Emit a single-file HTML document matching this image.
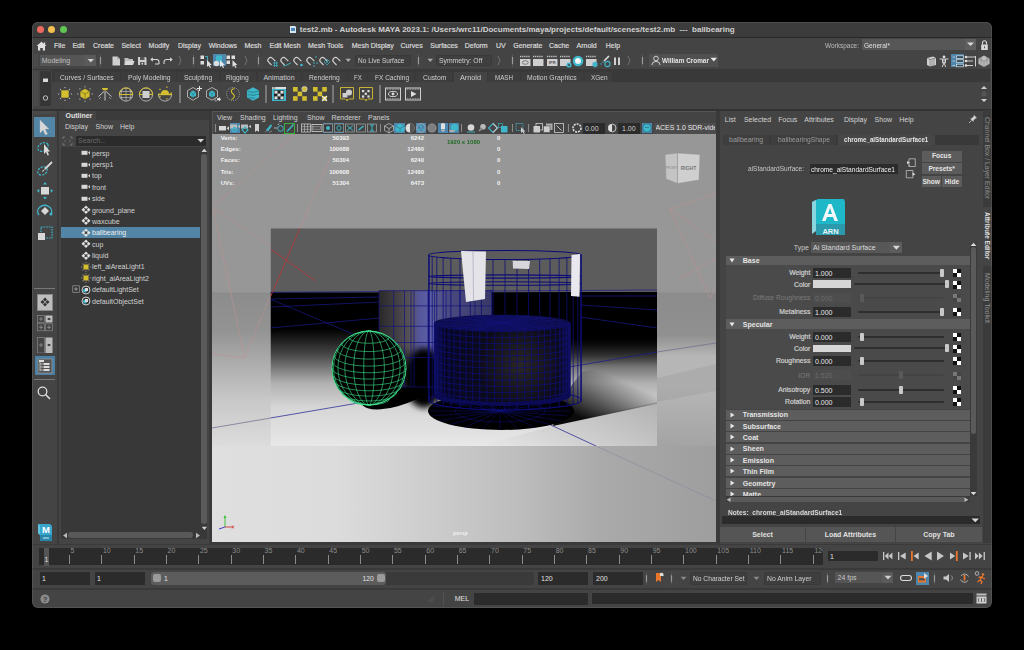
<!DOCTYPE html>
<html><head><meta charset="utf-8">
<style>
*{margin:0;padding:0;box-sizing:border-box}
html,body{width:1024px;height:650px;background:#000;overflow:hidden;font-family:"Liberation Sans",sans-serif}
#w{position:absolute;left:0;top:0;width:1024px;height:650px;clip-path:inset(22px 32px 42px 32px round 6px);background:#444}
.a{position:absolute}
.t{position:absolute;white-space:pre;line-height:1}
.b{font-weight:bold}
.m{-webkit-text-stroke:0.2px currentColor}
</style></head><body><div id="w">
<div class="a" style="left:32.00px;top:22.00px;width:960.00px;height:15.00px;background:#3c3c3c;"></div>
<div class="a" style="left:32.00px;top:37.00px;width:960.00px;height:1.00px;background:#282828;"></div>
<div class="a" style="left:36.50px;top:26.00px;width:7.00px;height:7.00px;background:#ed6a5e;border-radius:50%"></div>
<div class="a" style="left:48.00px;top:26.00px;width:7.00px;height:7.00px;background:#f5bf4f;border-radius:50%"></div>
<div class="a" style="left:59.50px;top:26.00px;width:7.00px;height:7.00px;background:#61c554;border-radius:50%"></div>
<div class="a" style="left:290.00px;top:26.00px;width:6.00px;height:7.00px;background:#8fb4d6;border-radius:1px"></div>
<div class="t b" style="left:299.75px;top:25.54px;font-size:8px;color:#cfcfcf;">test2.mb - Autodesk MAYA 2023.1: /Users/wrc11/Documents/maya/projects/default/scenes/test2.mb  ---  ballbearing</div>
<div class="t m" style="left:54.00px;top:42.23px;font-size:7px;color:#d8d8d8;">File</div>
<div class="t m" style="left:72.40px;top:42.23px;font-size:7px;color:#d8d8d8;">Edit</div>
<div class="t m" style="left:93.00px;top:42.23px;font-size:7px;color:#d8d8d8;">Create</div>
<div class="t m" style="left:121.40px;top:42.23px;font-size:7px;color:#d8d8d8;">Select</div>
<div class="t m" style="left:148.60px;top:42.23px;font-size:7px;color:#d8d8d8;">Modify</div>
<div class="t m" style="left:178.00px;top:42.23px;font-size:7px;color:#d8d8d8;">Display</div>
<div class="t m" style="left:208.70px;top:42.23px;font-size:7px;color:#d8d8d8;">Windows</div>
<div class="t m" style="left:244.40px;top:42.23px;font-size:7px;color:#d8d8d8;">Mesh</div>
<div class="t m" style="left:269.50px;top:42.23px;font-size:7px;color:#d8d8d8;">Edit Mesh</div>
<div class="t m" style="left:308.00px;top:42.23px;font-size:7px;color:#d8d8d8;">Mesh Tools</div>
<div class="t m" style="left:351.75px;top:42.23px;font-size:7px;color:#d8d8d8;">Mesh Display</div>
<div class="t m" style="left:400.50px;top:42.23px;font-size:7px;color:#d8d8d8;">Curves</div>
<div class="t m" style="left:430.25px;top:42.23px;font-size:7px;color:#d8d8d8;">Surfaces</div>
<div class="t m" style="left:464.75px;top:42.23px;font-size:7px;color:#d8d8d8;">Deform</div>
<div class="t m" style="left:496.00px;top:42.23px;font-size:7px;color:#d8d8d8;">UV</div>
<div class="t m" style="left:513.25px;top:42.23px;font-size:7px;color:#d8d8d8;">Generate</div>
<div class="t m" style="left:549.00px;top:42.23px;font-size:7px;color:#d8d8d8;">Cache</div>
<div class="t m" style="left:576.50px;top:42.23px;font-size:7px;color:#d8d8d8;">Arnold</div>
<div class="t m" style="left:605.75px;top:42.23px;font-size:7px;color:#d8d8d8;">Help</div>
<div class="t" style="left:825.30px;top:42.03px;font-size:7px;color:#bdbdbd;transform:scaleX(0.9232);transform-origin:0 0;">Workspace:</div>
<div class="a" style="left:862.00px;top:39.30px;width:114.00px;height:10.70px;background:#575757;"></div>
<div class="a" style="left:964.50px;top:39.30px;width:11.50px;height:10.70px;background:#5f5f5f;"></div>
<div class="t" style="left:864.00px;top:41.83px;font-size:7px;color:#e0e0e0;transform:scaleX(0.9411);transform-origin:0 0;">General*</div>
<div class="a" style="left:39.80px;top:55.00px;width:56.00px;height:11.00px;background:#555555;"></div>
<div class="a" style="left:84.30px;top:55.00px;width:11.50px;height:11.00px;background:#5a5a5a;"></div>
<div class="t" style="left:41.70px;top:57.23px;font-size:7px;color:#c0c0c0;">Modeling</div>
<div class="a" style="left:355.00px;top:54.70px;width:56.30px;height:11.30px;background:#3f3f3f;border:1px solid #393939;border-radius:2px"></div>
<div class="t" style="left:357.80px;top:57.13px;font-size:7px;color:#d0d0d0;transform:scaleX(0.9317);transform-origin:0 0;">No Live Surface</div>
<div class="a" style="left:436.30px;top:54.70px;width:56.00px;height:11.30px;background:#3f3f3f;border:1px solid #393939;border-radius:2px"></div>
<div class="t" style="left:439.00px;top:57.13px;font-size:7px;color:#d0d0d0;transform:scaleX(0.9710);transform-origin:0 0;">Symmetry: Off</div>
<div class="a" style="left:649.00px;top:54.00px;width:68.80px;height:12.80px;background:#505050;"></div>
<div class="t b" style="left:662.00px;top:57.13px;font-size:7px;color:#e6e6e6;transform:scaleX(0.9145);transform-origin:0 0;">William Cromar</div>
<div class="a" style="left:32.00px;top:68.50px;width:960.00px;height:1.00px;background:#383838;"></div>
<div class="a" style="left:40.30px;top:70.80px;width:10.70px;height:35.20px;background:#363636;"></div>
<div class="a" style="left:52.00px;top:70.00px;width:938.00px;height:11.50px;background:#393939;"></div>
<div class="a" style="left:54.60px;top:72.00px;width:65.40px;height:9.50px;background:#3d3d3d;"></div>
<div class="t" style="left:59.50px;top:73.63px;font-size:7px;color:#cfcfcf;transform:scaleX(0.9617);transform-origin:0 0;">Curves / Surfaces</div>
<div class="a" style="left:121.00px;top:72.00px;width:54.70px;height:9.50px;background:#3d3d3d;"></div>
<div class="t" style="left:127.50px;top:73.63px;font-size:7px;color:#cfcfcf;transform:scaleX(0.9644);transform-origin:0 0;">Poly Modeling</div>
<div class="a" style="left:177.00px;top:72.00px;width:42.20px;height:9.50px;background:#3d3d3d;"></div>
<div class="t" style="left:184.00px;top:73.63px;font-size:7px;color:#cfcfcf;transform:scaleX(0.9793);transform-origin:0 0;">Sculpting</div>
<div class="a" style="left:220.80px;top:72.00px;width:35.20px;height:9.50px;background:#3d3d3d;"></div>
<div class="t" style="left:226.25px;top:73.63px;font-size:7px;color:#cfcfcf;transform:scaleX(0.9542);transform-origin:0 0;">Rigging</div>
<div class="a" style="left:257.50px;top:72.00px;width:43.00px;height:9.50px;background:#3d3d3d;"></div>
<div class="t" style="left:263.40px;top:73.63px;font-size:7px;color:#cfcfcf;">Animation</div>
<div class="a" style="left:302.00px;top:72.00px;width:44.60px;height:9.50px;background:#3d3d3d;"></div>
<div class="t" style="left:308.75px;top:73.63px;font-size:7px;color:#cfcfcf;transform:scaleX(0.9521);transform-origin:0 0;">Rendering</div>
<div class="a" style="left:348.00px;top:72.00px;width:18.90px;height:9.50px;background:#3d3d3d;"></div>
<div class="t" style="left:353.60px;top:73.63px;font-size:7px;color:#cfcfcf;transform:scaleX(0.8720);transform-origin:0 0;">FX</div>
<div class="a" style="left:368.40px;top:72.00px;width:46.10px;height:9.50px;background:#3d3d3d;"></div>
<div class="t" style="left:374.70px;top:73.63px;font-size:7px;color:#cfcfcf;transform:scaleX(0.9311);transform-origin:0 0;">FX Caching</div>
<div class="a" style="left:416.00px;top:72.00px;width:36.00px;height:9.50px;background:#3d3d3d;"></div>
<div class="t" style="left:422.80px;top:73.63px;font-size:7px;color:#cfcfcf;transform:scaleX(0.9724);transform-origin:0 0;">Custom</div>
<div class="a" style="left:454.00px;top:72.00px;width:33.00px;height:9.50px;background:#444;"></div>
<div class="t" style="left:460.00px;top:73.63px;font-size:7px;color:#cfcfcf;transform:scaleX(1.0379);transform-origin:0 0;">Arnold</div>
<div class="a" style="left:488.00px;top:72.00px;width:31.60px;height:9.50px;background:#3d3d3d;"></div>
<div class="t" style="left:494.80px;top:73.63px;font-size:7px;color:#cfcfcf;transform:scaleX(0.8900);transform-origin:0 0;">MASH</div>
<div class="a" style="left:521.00px;top:72.00px;width:62.00px;height:9.50px;background:#3d3d3d;"></div>
<div class="t" style="left:527.00px;top:73.63px;font-size:7px;color:#cfcfcf;transform:scaleX(0.9733);transform-origin:0 0;">Motion Graphics</div>
<div class="a" style="left:585.00px;top:72.00px;width:27.00px;height:9.50px;background:#3d3d3d;"></div>
<div class="t" style="left:590.50px;top:73.63px;font-size:7px;color:#cfcfcf;transform:scaleX(0.9218);transform-origin:0 0;">XGen</div>
<div class="a" style="left:32.00px;top:108.50px;width:960.00px;height:2.00px;background:#333333;"></div>
<div class="a" style="left:57.00px;top:110.50px;width:2.00px;height:433.00px;background:#3a3a3a;"></div>
<div class="a" style="left:59.00px;top:110.50px;width:37.00px;height:9.50px;background:#444;"></div>
<div class="a" style="left:96.00px;top:110.50px;width:113.00px;height:9.50px;background:#3b3b3b;"></div>
<div class="t b" style="left:65.50px;top:112.13px;font-size:7px;color:#e0e0e0;">Outliner</div>
<div class="t" style="left:65.00px;top:123.13px;font-size:7px;color:#d0d0d0;">Display</div>
<div class="t" style="left:95.50px;top:123.13px;font-size:7px;color:#d0d0d0;">Show</div>
<div class="t" style="left:120.00px;top:123.13px;font-size:7px;color:#d0d0d0;">Help</div>
<div class="a" style="left:76.30px;top:135.60px;width:130.00px;height:10.00px;background:#2b2b2b;"></div>
<div class="t" style="left:78.00px;top:137.43px;font-size:7px;color:#6a6a6a;">Search...</div>
<div class="a" style="left:60.50px;top:146.50px;width:146.50px;height:392.00px;background:#383838;"></div>
<div class="a" style="left:200.80px;top:146.50px;width:6.20px;height:385.00px;background:#393939;"></div>
<div class="a" style="left:201.20px;top:154.00px;width:5.40px;height:369.50px;background:#5a5a5a;border-radius:2.7px"></div>
<div class="t" style="left:92.00px;top:149.63px;font-size:7px;color:#d2d2d2;">persp</div>
<div class="t" style="left:92.00px;top:161.01px;font-size:7px;color:#d2d2d2;">persp1</div>
<div class="t" style="left:92.00px;top:172.39px;font-size:7px;color:#d2d2d2;">top</div>
<div class="t" style="left:92.00px;top:183.77px;font-size:7px;color:#d2d2d2;">front</div>
<div class="t" style="left:92.00px;top:195.15px;font-size:7px;color:#d2d2d2;">side</div>
<div class="t" style="left:92.00px;top:206.53px;font-size:7px;color:#d2d2d2;">ground_plane</div>
<div class="t" style="left:92.00px;top:217.91px;font-size:7px;color:#d2d2d2;">waxcube</div>
<div class="a" style="left:60.80px;top:227.00px;width:139.50px;height:11.00px;background:#5285a6;"></div>
<div class="t" style="left:92.00px;top:229.29px;font-size:7px;color:#f0f0f0;">ballbearing</div>
<div class="t" style="left:92.00px;top:240.67px;font-size:7px;color:#d2d2d2;">cup</div>
<div class="t" style="left:92.00px;top:252.05px;font-size:7px;color:#d2d2d2;">liquid</div>
<div class="t" style="left:92.00px;top:263.43px;font-size:7px;color:#d2d2d2;">left_aiAreaLight1</div>
<div class="t" style="left:92.00px;top:274.81px;font-size:7px;color:#d2d2d2;">right_aiAreaLight2</div>
<div class="t" style="left:92.00px;top:286.19px;font-size:7px;color:#d2d2d2;">defaultLightSet</div>
<div class="t" style="left:92.00px;top:297.57px;font-size:7px;color:#d2d2d2;">defaultObjectSet</div>
<div class="a" style="left:60.50px;top:531.50px;width:146.50px;height:7.00px;background:#383838;"></div>
<div class="a" style="left:67.50px;top:532.30px;width:125.00px;height:5.80px;background:#595959;border-radius:2.9px"></div>
<div class="a" style="left:209.00px;top:110.50px;width:3.00px;height:433.00px;background:#3a3a3a;"></div>
<div class="a" style="left:212.00px;top:111.30px;width:503.50px;height:22.50px;background:#444;border-top:1px solid #555;border-left:1px solid #555"></div>
<div class="t" style="left:217.00px;top:113.83px;font-size:7px;color:#d2d2d2;">View</div>
<div class="t" style="left:240.00px;top:113.83px;font-size:7px;color:#d2d2d2;">Shading</div>
<div class="t" style="left:273.00px;top:113.83px;font-size:7px;color:#d2d2d2;">Lighting</div>
<div class="t" style="left:307.00px;top:113.83px;font-size:7px;color:#d2d2d2;">Show</div>
<div class="t" style="left:331.40px;top:113.83px;font-size:7px;color:#d2d2d2;">Renderer</div>
<div class="t" style="left:368.00px;top:113.83px;font-size:7px;color:#d2d2d2;">Panels</div>
<div class="a" style="left:212.00px;top:134.00px;width:503.50px;height:407.50px;background:#9c9c9c;"></div>
<div class="a" style="left:212.00px;top:541.50px;width:503.50px;height:2.00px;background:#3a3a3a;"></div>
<div class="a" style="left:715.50px;top:110.50px;width:4.00px;height:433.00px;background:#3a3a3a;"></div>
<div class="t" style="left:724.75px;top:116.13px;font-size:7px;color:#d2d2d2;">List</div>
<div class="t" style="left:743.90px;top:116.13px;font-size:7px;color:#d2d2d2;">Selected</div>
<div class="t" style="left:778.30px;top:116.13px;font-size:7px;color:#d2d2d2;">Focus</div>
<div class="t" style="left:804.30px;top:116.13px;font-size:7px;color:#d2d2d2;">Attributes</div>
<div class="t" style="left:844.00px;top:116.13px;font-size:7px;color:#d2d2d2;">Display</div>
<div class="t" style="left:874.60px;top:116.13px;font-size:7px;color:#d2d2d2;">Show</div>
<div class="t" style="left:899.20px;top:116.13px;font-size:7px;color:#d2d2d2;">Help</div>
<div class="a" style="left:722.80px;top:135.00px;width:256.20px;height:9.60px;background:#393939;"></div>
<div class="a" style="left:722.80px;top:135.00px;width:46.50px;height:9.60px;background:#3e3e3e;"></div>
<div class="a" style="left:771.20px;top:135.00px;width:65.10px;height:9.60px;background:#3e3e3e;"></div>
<div class="a" style="left:837.70px;top:135.00px;width:97.10px;height:9.60px;background:#474747;"></div>
<div class="t" style="left:729.00px;top:136.43px;font-size:7px;color:#9a9a9a;">ballbearing</div>
<div class="t" style="left:777.50px;top:136.43px;font-size:7px;color:#9a9a9a;transform:scaleX(0.9544);transform-origin:0 0;">ballbearingShape</div>
<div class="t b" style="left:843.70px;top:136.43px;font-size:7px;color:#e6e6e6;transform:scaleX(0.8881);transform-origin:0 0;">chrome_aiStandardSurface1</div>
<div class="t" style="left:748.00px;top:165.33px;font-size:7px;color:#c8c8c8;transform:scaleX(0.9345);transform-origin:0 0;">aiStandardSurface:</div>
<div class="a" style="left:809.80px;top:163.80px;width:88.00px;height:10.10px;background:#2b2b2b;"></div>
<div class="t" style="left:811.00px;top:165.53px;font-size:7px;color:#f0f0f0;transform:scaleX(0.9427);transform-origin:0 0;">chrome_aiStandardSurface1</div>
<div class="a" style="left:921.60px;top:150.70px;width:40.00px;height:11.20px;background:#5c5c5c;"></div>
<div class="t b" style="left:931.88px;top:153.42px;font-size:6.6px;color:#e4e4e4;">Focus</div>
<div class="a" style="left:921.60px;top:163.20px;width:40.00px;height:11.00px;background:#5c5c5c;"></div>
<div class="t b" style="left:928.39px;top:165.82px;font-size:6.6px;color:#e4e4e4;">Presets*</div>
<div class="a" style="left:921.60px;top:176.00px;width:19.20px;height:11.00px;background:#5c5c5c;"></div>
<div class="t b" style="left:922.40px;top:178.62px;font-size:6.6px;color:#e4e4e4;">Show</div>
<div class="a" style="left:942.40px;top:176.00px;width:19.20px;height:11.00px;background:#5c5c5c;"></div>
<div class="t b" style="left:944.85px;top:178.62px;font-size:6.6px;color:#e4e4e4;">Hide</div>
<div class="t" style="left:793.83px;top:244.13px;font-size:7px;color:#c8c8c8;">Type</div>
<div class="a" style="left:811.20px;top:242.30px;width:90.70px;height:10.40px;background:#575757;"></div>
<div class="a" style="left:890.20px;top:242.30px;width:11.70px;height:10.40px;background:#5c5c5c;"></div>
<div class="t" style="left:813.00px;top:244.13px;font-size:7px;color:#dcdcdc;">Ai Standard Surface</div>
<div class="a" style="left:983.00px;top:110.00px;width:9.00px;height:433.00px;background:#3b3b3b;"></div>
<div class="a" style="left:983.00px;top:206.50px;width:9.00px;height:59.20px;background:#444;"></div>
<div class="a" style="left:725.60px;top:265.00px;width:244.70px;height:54.00px;background:#4a4a4a;"></div>
<div class="a" style="left:725.60px;top:329.30px;width:244.70px;height:80.00px;background:#4a4a4a;"></div>
<div class="a" style="left:725.60px;top:255.50px;width:244.70px;height:9.50px;background:#5d5d5d;"></div>
<svg class="a" style="left:729px;top:258.0px;" width="6" height="5" viewBox="0 0 6 5"><path d="M0.5 0.5 L5.5 0.5 L3 4.5 Z" fill="#e8e8e8"/></svg>
<div class="t b" style="left:742.80px;top:257.18px;font-size:7px;color:#e4e4e4;">Base</div>
<div class="a" style="left:725.60px;top:319.20px;width:244.70px;height:10.10px;background:#5d5d5d;"></div>
<svg class="a" style="left:729px;top:321.7px;" width="6" height="5" viewBox="0 0 6 5"><path d="M0.5 0.5 L5.5 0.5 L3 4.5 Z" fill="#e8e8e8"/></svg>
<div class="t b" style="left:742.80px;top:320.88px;font-size:7px;color:#e4e4e4;">Specular</div>
<div class="t m" style="left:789.26px;top:270.02px;font-size:6.8px;color:#d0d0d0;">Weight</div>
<div class="a" style="left:813.00px;top:267.70px;width:37.80px;height:10.10px;background:#2b2b2b;"></div>
<div class="t" style="left:815.00px;top:269.93px;font-size:7px;color:#e8e8e8;">1.000</div>
<div class="a" style="left:858.20px;top:271.70px;width:86.10px;height:2.00px;background:#2e2e2e;border-radius:1px"></div>
<div class="a" style="left:939.70px;top:268.70px;width:4.10px;height:8.00px;background:#c8c8c8;border-radius:1px"></div>
<svg class="a" style="left:953px;top:269.0px;" width="8" height="8" viewBox="0 0 8 8"><rect width="8" height="8" fill="#111"/><rect x="0" y="0" width="4" height="4" fill="#fff"/><rect x="4" y="4" width="4" height="4" fill="#fff"/></svg>
<div class="t m" style="left:794.05px;top:281.52px;font-size:6.8px;color:#d0d0d0;">Color</div>
<div class="a" style="left:813.00px;top:280.40px;width:37.80px;height:7.70px;background:#d6d6d6;"></div>
<div class="a" style="left:854.00px;top:283.20px;width:94.30px;height:2.00px;background:#2e2e2e;border-radius:1px"></div>
<div class="a" style="left:945.20px;top:280.20px;width:4.10px;height:8.00px;background:#c8c8c8;border-radius:1px"></div>
<svg class="a" style="left:953px;top:280.5px;" width="8" height="8" viewBox="0 0 8 8"><rect width="8" height="8" fill="#111"/><rect x="0" y="0" width="4" height="4" fill="#fff"/><rect x="4" y="4" width="4" height="4" fill="#fff"/></svg>
<div class="t" style="left:752.97px;top:295.22px;font-size:6.8px;color:#7a7a7a;">Diffuse Roughness</div>
<div class="a" style="left:813.00px;top:292.90px;width:37.80px;height:10.10px;background:#4d4d4d;"></div>
<div class="t" style="left:815.00px;top:295.13px;font-size:7px;color:#6c6c6c;">0.000</div>
<div class="a" style="left:858.20px;top:296.90px;width:86.10px;height:2.00px;background:#444;border-radius:1px"></div>
<div class="a" style="left:859.60px;top:293.90px;width:4.10px;height:8.00px;background:#5a5a5a;border-radius:1px"></div>
<svg class="a" style="left:953px;top:294.2px;" width="8" height="8" viewBox="0 0 8 8"><rect width="8" height="8" fill="#444"/><rect x="0" y="0" width="4" height="4" fill="#777"/><rect x="4" y="4" width="4" height="4" fill="#777"/></svg>
<div class="t m" style="left:779.31px;top:308.82px;font-size:6.8px;color:#d0d0d0;">Metalness</div>
<div class="a" style="left:813.00px;top:306.50px;width:37.80px;height:10.10px;background:#2b2b2b;"></div>
<div class="t" style="left:815.00px;top:308.73px;font-size:7px;color:#e8e8e8;">1.000</div>
<div class="a" style="left:858.20px;top:310.50px;width:86.10px;height:2.00px;background:#2e2e2e;border-radius:1px"></div>
<div class="a" style="left:939.70px;top:307.50px;width:4.10px;height:8.00px;background:#c8c8c8;border-radius:1px"></div>
<svg class="a" style="left:953px;top:307.8px;" width="8" height="8" viewBox="0 0 8 8"><rect width="8" height="8" fill="#111"/><rect x="0" y="0" width="4" height="4" fill="#fff"/><rect x="4" y="4" width="4" height="4" fill="#fff"/></svg>
<div class="t m" style="left:789.26px;top:334.32px;font-size:6.8px;color:#d0d0d0;">Weight</div>
<div class="a" style="left:813.00px;top:332.00px;width:37.80px;height:10.10px;background:#2b2b2b;"></div>
<div class="t" style="left:815.00px;top:334.23px;font-size:7px;color:#e8e8e8;">0.000</div>
<div class="a" style="left:858.20px;top:336.00px;width:86.10px;height:2.00px;background:#2e2e2e;border-radius:1px"></div>
<div class="a" style="left:859.60px;top:333.00px;width:4.10px;height:8.00px;background:#c8c8c8;border-radius:1px"></div>
<svg class="a" style="left:953px;top:333.3px;" width="8" height="8" viewBox="0 0 8 8"><rect width="8" height="8" fill="#111"/><rect x="0" y="0" width="4" height="4" fill="#fff"/><rect x="4" y="4" width="4" height="4" fill="#fff"/></svg>
<div class="t m" style="left:794.05px;top:345.72px;font-size:6.8px;color:#d0d0d0;">Color</div>
<div class="a" style="left:813.00px;top:344.60px;width:37.80px;height:7.70px;background:#d6d6d6;"></div>
<div class="a" style="left:854.00px;top:347.40px;width:94.30px;height:2.00px;background:#2e2e2e;border-radius:1px"></div>
<div class="a" style="left:945.20px;top:344.40px;width:4.10px;height:8.00px;background:#c8c8c8;border-radius:1px"></div>
<svg class="a" style="left:953px;top:344.7px;" width="8" height="8" viewBox="0 0 8 8"><rect width="8" height="8" fill="#111"/><rect x="0" y="0" width="4" height="4" fill="#fff"/><rect x="4" y="4" width="4" height="4" fill="#fff"/></svg>
<div class="t m" style="left:775.90px;top:358.02px;font-size:6.8px;color:#d0d0d0;">Roughness</div>
<div class="a" style="left:813.00px;top:355.70px;width:37.80px;height:10.10px;background:#2b2b2b;"></div>
<div class="t" style="left:815.00px;top:357.93px;font-size:7px;color:#e8e8e8;">0.000</div>
<div class="a" style="left:858.20px;top:359.70px;width:86.10px;height:2.00px;background:#2e2e2e;border-radius:1px"></div>
<div class="a" style="left:859.60px;top:356.70px;width:4.10px;height:8.00px;background:#c8c8c8;border-radius:1px"></div>
<svg class="a" style="left:953px;top:357.0px;" width="8" height="8" viewBox="0 0 8 8"><rect width="8" height="8" fill="#111"/><rect x="0" y="0" width="4" height="4" fill="#fff"/><rect x="4" y="4" width="4" height="4" fill="#fff"/></svg>
<div class="t" style="left:798.21px;top:372.52px;font-size:6.8px;color:#7a7a7a;">IOR</div>
<div class="a" style="left:813.00px;top:370.20px;width:37.80px;height:10.10px;background:#4d4d4d;"></div>
<div class="t" style="left:815.00px;top:372.43px;font-size:7px;color:#6c6c6c;">1.520</div>
<div class="a" style="left:858.20px;top:374.20px;width:86.10px;height:2.00px;background:#444;border-radius:1px"></div>
<div class="a" style="left:899.40px;top:371.20px;width:4.10px;height:8.00px;background:#5a5a5a;border-radius:1px"></div>
<svg class="a" style="left:953px;top:371.5px;" width="8" height="8" viewBox="0 0 8 8"><rect width="8" height="8" fill="#444"/><rect x="0" y="0" width="4" height="4" fill="#777"/><rect x="4" y="4" width="4" height="4" fill="#777"/></svg>
<div class="t m" style="left:778.17px;top:386.82px;font-size:6.8px;color:#d0d0d0;">Anisotropy</div>
<div class="a" style="left:813.00px;top:384.50px;width:37.80px;height:10.10px;background:#2b2b2b;"></div>
<div class="t" style="left:815.00px;top:386.73px;font-size:7px;color:#e8e8e8;">0.500</div>
<div class="a" style="left:858.20px;top:388.50px;width:86.10px;height:2.00px;background:#2e2e2e;border-radius:1px"></div>
<div class="a" style="left:899.40px;top:385.50px;width:4.10px;height:8.00px;background:#c8c8c8;border-radius:1px"></div>
<svg class="a" style="left:953px;top:385.8px;" width="8" height="8" viewBox="0 0 8 8"><rect width="8" height="8" fill="#111"/><rect x="0" y="0" width="4" height="4" fill="#fff"/><rect x="4" y="4" width="4" height="4" fill="#fff"/></svg>
<div class="t m" style="left:784.97px;top:399.12px;font-size:6.8px;color:#d0d0d0;">Rotation</div>
<div class="a" style="left:813.00px;top:396.80px;width:37.80px;height:10.10px;background:#2b2b2b;"></div>
<div class="t" style="left:815.00px;top:399.03px;font-size:7px;color:#e8e8e8;">0.000</div>
<div class="a" style="left:858.20px;top:400.80px;width:86.10px;height:2.00px;background:#2e2e2e;border-radius:1px"></div>
<div class="a" style="left:859.60px;top:397.80px;width:4.10px;height:8.00px;background:#c8c8c8;border-radius:1px"></div>
<svg class="a" style="left:953px;top:398.1px;" width="8" height="8" viewBox="0 0 8 8"><rect width="8" height="8" fill="#111"/><rect x="0" y="0" width="4" height="4" fill="#fff"/><rect x="4" y="4" width="4" height="4" fill="#fff"/></svg>
<div class="a" style="left:725.60px;top:409.60px;width:244.70px;height:10.10px;background:#5d5d5d;"></div>
<svg class="a" style="left:730px;top:411.6px;" width="5" height="6" viewBox="0 0 5 6"><path d="M0.5 0.5 L4.5 3 L0.5 5.5 Z" fill="#e8e8e8"/></svg>
<div class="t b" style="left:742.80px;top:411.28px;font-size:7px;color:#e4e4e4;">Transmission</div>
<div class="a" style="left:725.60px;top:421.00px;width:244.70px;height:10.10px;background:#5d5d5d;"></div>
<svg class="a" style="left:730px;top:423px;" width="5" height="6" viewBox="0 0 5 6"><path d="M0.5 0.5 L4.5 3 L0.5 5.5 Z" fill="#e8e8e8"/></svg>
<div class="t b" style="left:742.80px;top:422.68px;font-size:7px;color:#e4e4e4;">Subsurface</div>
<div class="a" style="left:725.60px;top:432.30px;width:244.70px;height:10.10px;background:#5d5d5d;"></div>
<svg class="a" style="left:730px;top:434.3px;" width="5" height="6" viewBox="0 0 5 6"><path d="M0.5 0.5 L4.5 3 L0.5 5.5 Z" fill="#e8e8e8"/></svg>
<div class="t b" style="left:742.80px;top:433.98px;font-size:7px;color:#e4e4e4;">Coat</div>
<div class="a" style="left:725.60px;top:443.75px;width:244.70px;height:10.10px;background:#5d5d5d;"></div>
<svg class="a" style="left:730px;top:445.75px;" width="5" height="6" viewBox="0 0 5 6"><path d="M0.5 0.5 L4.5 3 L0.5 5.5 Z" fill="#e8e8e8"/></svg>
<div class="t b" style="left:742.80px;top:445.43px;font-size:7px;color:#e4e4e4;">Sheen</div>
<div class="a" style="left:725.60px;top:455.20px;width:244.70px;height:10.10px;background:#5d5d5d;"></div>
<svg class="a" style="left:730px;top:457.2px;" width="5" height="6" viewBox="0 0 5 6"><path d="M0.5 0.5 L4.5 3 L0.5 5.5 Z" fill="#e8e8e8"/></svg>
<div class="t b" style="left:742.80px;top:456.88px;font-size:7px;color:#e4e4e4;">Emission</div>
<div class="a" style="left:725.60px;top:466.40px;width:244.70px;height:10.10px;background:#5d5d5d;"></div>
<svg class="a" style="left:730px;top:468.4px;" width="5" height="6" viewBox="0 0 5 6"><path d="M0.5 0.5 L4.5 3 L0.5 5.5 Z" fill="#e8e8e8"/></svg>
<div class="t b" style="left:742.80px;top:468.08px;font-size:7px;color:#e4e4e4;">Thin Film</div>
<div class="a" style="left:725.60px;top:478.00px;width:244.70px;height:10.10px;background:#5d5d5d;"></div>
<svg class="a" style="left:730px;top:480px;" width="5" height="6" viewBox="0 0 5 6"><path d="M0.5 0.5 L4.5 3 L0.5 5.5 Z" fill="#e8e8e8"/></svg>
<div class="t b" style="left:742.80px;top:479.68px;font-size:7px;color:#e4e4e4;">Geometry</div>
<div class="a" style="left:725.60px;top:489.40px;width:244.70px;height:6.90px;background:#5d5d5d;"></div>
<svg class="a" style="left:730px;top:491.4px;" width="5" height="6" viewBox="0 0 5 6"><path d="M0.5 0.5 L4.5 3 L0.5 5.5 Z" fill="#e8e8e8"/></svg>
<div class="t b" style="left:742.80px;top:491.08px;font-size:7px;color:#e4e4e4;">Matte</div>
<div class="a" style="left:725.60px;top:496.30px;width:244.70px;height:6.20px;background:#3a3a3a;"></div>
<div class="a" style="left:729.00px;top:497.00px;width:237.00px;height:4.80px;background:#5a5a5a;border-radius:2.4px"></div>
<div class="a" style="left:970.30px;top:243.00px;width:6.80px;height:253.00px;background:#3a3a3a;"></div>
<div class="a" style="left:971.00px;top:247.40px;width:5.40px;height:187.00px;background:#5a5a5a;border-radius:2.7px"></div>
<div class="t b" style="left:727.50px;top:509.33px;font-size:7px;color:#d8d8d8;transform:scaleX(0.9478);transform-origin:0 0;">Notes:  chrome_aiStandardSurface1</div>
<div class="a" style="left:722.00px;top:516.20px;width:258.00px;height:7.40px;background:#2b2b2b;"></div>
<div class="a" style="left:720.10px;top:527.20px;width:84.80px;height:15.00px;background:#555555;"></div>
<div class="t b" style="left:752.19px;top:531.43px;font-size:7px;color:#e0e0e0;">Select</div>
<div class="a" style="left:806.20px;top:527.20px;width:88.40px;height:15.00px;background:#555555;"></div>
<div class="t b" style="left:824.67px;top:531.43px;font-size:7px;color:#e0e0e0;">Load Attributes</div>
<div class="a" style="left:896.00px;top:527.20px;width:85.80px;height:15.00px;background:#555555;"></div>
<div class="t b" style="left:923.22px;top:531.43px;font-size:7px;color:#e0e0e0;">Copy Tab</div>
<div class="a" style="left:32.00px;top:543.50px;width:960.00px;height:1.50px;background:#3a3a3a;"></div>
<div class="a" style="left:39.30px;top:547.60px;width:784.00px;height:17.80px;background:#2b2b2b;"></div>
<div class="a" style="left:43.80px;top:547.60px;width:5.40px;height:18.40px;background:#555555;"></div>
<div class="t" style="left:44.60px;top:555.83px;font-size:7px;color:#e0e0e0;">1</div>
<div class="a" style="left:68.87px;top:555.10px;width:1.00px;height:8.60px;background:#8c8c8c;"></div>
<div class="t" style="left:70.57px;top:547.43px;font-size:7px;color:#8c8c8c;">5</div>
<div class="a" style="left:101.21px;top:555.10px;width:1.00px;height:8.60px;background:#8c8c8c;"></div>
<div class="t" style="left:102.91px;top:547.43px;font-size:7px;color:#8c8c8c;">10</div>
<div class="a" style="left:133.55px;top:555.10px;width:1.00px;height:8.60px;background:#8c8c8c;"></div>
<div class="t" style="left:135.25px;top:547.43px;font-size:7px;color:#8c8c8c;">15</div>
<div class="a" style="left:165.89px;top:555.10px;width:1.00px;height:8.60px;background:#8c8c8c;"></div>
<div class="t" style="left:167.59px;top:547.43px;font-size:7px;color:#8c8c8c;">20</div>
<div class="a" style="left:198.23px;top:555.10px;width:1.00px;height:8.60px;background:#8c8c8c;"></div>
<div class="t" style="left:199.93px;top:547.43px;font-size:7px;color:#8c8c8c;">25</div>
<div class="a" style="left:230.57px;top:555.10px;width:1.00px;height:8.60px;background:#8c8c8c;"></div>
<div class="t" style="left:232.27px;top:547.43px;font-size:7px;color:#8c8c8c;">30</div>
<div class="a" style="left:262.91px;top:555.10px;width:1.00px;height:8.60px;background:#8c8c8c;"></div>
<div class="t" style="left:264.61px;top:547.43px;font-size:7px;color:#8c8c8c;">35</div>
<div class="a" style="left:295.25px;top:555.10px;width:1.00px;height:8.60px;background:#8c8c8c;"></div>
<div class="t" style="left:296.95px;top:547.43px;font-size:7px;color:#8c8c8c;">40</div>
<div class="a" style="left:327.59px;top:555.10px;width:1.00px;height:8.60px;background:#8c8c8c;"></div>
<div class="t" style="left:329.29px;top:547.43px;font-size:7px;color:#8c8c8c;">45</div>
<div class="a" style="left:359.93px;top:555.10px;width:1.00px;height:8.60px;background:#8c8c8c;"></div>
<div class="t" style="left:361.63px;top:547.43px;font-size:7px;color:#8c8c8c;">50</div>
<div class="a" style="left:392.27px;top:555.10px;width:1.00px;height:8.60px;background:#8c8c8c;"></div>
<div class="t" style="left:393.97px;top:547.43px;font-size:7px;color:#8c8c8c;">55</div>
<div class="a" style="left:424.61px;top:555.10px;width:1.00px;height:8.60px;background:#8c8c8c;"></div>
<div class="t" style="left:426.31px;top:547.43px;font-size:7px;color:#8c8c8c;">60</div>
<div class="a" style="left:456.95px;top:555.10px;width:1.00px;height:8.60px;background:#8c8c8c;"></div>
<div class="t" style="left:458.65px;top:547.43px;font-size:7px;color:#8c8c8c;">65</div>
<div class="a" style="left:489.29px;top:555.10px;width:1.00px;height:8.60px;background:#8c8c8c;"></div>
<div class="t" style="left:490.99px;top:547.43px;font-size:7px;color:#8c8c8c;">70</div>
<div class="a" style="left:521.63px;top:555.10px;width:1.00px;height:8.60px;background:#8c8c8c;"></div>
<div class="t" style="left:523.33px;top:547.43px;font-size:7px;color:#8c8c8c;">75</div>
<div class="a" style="left:553.97px;top:555.10px;width:1.00px;height:8.60px;background:#8c8c8c;"></div>
<div class="t" style="left:555.67px;top:547.43px;font-size:7px;color:#8c8c8c;">80</div>
<div class="a" style="left:586.31px;top:555.10px;width:1.00px;height:8.60px;background:#8c8c8c;"></div>
<div class="t" style="left:588.01px;top:547.43px;font-size:7px;color:#8c8c8c;">85</div>
<div class="a" style="left:618.65px;top:555.10px;width:1.00px;height:8.60px;background:#8c8c8c;"></div>
<div class="t" style="left:620.35px;top:547.43px;font-size:7px;color:#8c8c8c;">90</div>
<div class="a" style="left:650.99px;top:555.10px;width:1.00px;height:8.60px;background:#8c8c8c;"></div>
<div class="t" style="left:652.69px;top:547.43px;font-size:7px;color:#8c8c8c;">95</div>
<div class="a" style="left:683.33px;top:555.10px;width:1.00px;height:8.60px;background:#8c8c8c;"></div>
<div class="t" style="left:685.03px;top:547.43px;font-size:7px;color:#8c8c8c;">100</div>
<div class="a" style="left:715.67px;top:555.10px;width:1.00px;height:8.60px;background:#8c8c8c;"></div>
<div class="t" style="left:717.37px;top:547.43px;font-size:7px;color:#8c8c8c;">105</div>
<div class="a" style="left:748.01px;top:555.10px;width:1.00px;height:8.60px;background:#8c8c8c;"></div>
<div class="t" style="left:749.71px;top:547.43px;font-size:7px;color:#8c8c8c;">110</div>
<div class="a" style="left:780.35px;top:555.10px;width:1.00px;height:8.60px;background:#8c8c8c;"></div>
<div class="t" style="left:782.05px;top:547.43px;font-size:7px;color:#8c8c8c;">115</div>
<div class="a" style="left:812.69px;top:555.10px;width:1.00px;height:8.60px;background:#8c8c8c;"></div>
<div class="t" style="left:814.39px;top:547.43px;font-size:7px;color:#8c8c8c;">120</div>
<div class="a" style="left:823.30px;top:545.00px;width:4.70px;height:22.00px;background:#444;"></div>
<div class="a" style="left:828.00px;top:551.10px;width:49.60px;height:10.20px;background:#2b2b2b;"></div>
<div class="t" style="left:830.00px;top:553.03px;font-size:7px;color:#e0e0e0;">1</div>
<div class="a" style="left:32.00px;top:568.00px;width:960.00px;height:2.00px;background:#3a3a3a;"></div>
<div class="a" style="left:40.00px;top:572.40px;width:50.00px;height:12.70px;background:#2b2b2b;"></div>
<div class="t" style="left:42.00px;top:575.33px;font-size:7px;color:#e0e0e0;">1</div>
<div class="a" style="left:94.80px;top:572.40px;width:50.40px;height:12.70px;background:#2b2b2b;"></div>
<div class="t" style="left:97.00px;top:575.33px;font-size:7px;color:#e0e0e0;">1</div>
<div class="a" style="left:150.60px;top:571.90px;width:383.00px;height:13.40px;background:#3a3a3a;border-radius:2px"></div>
<div class="a" style="left:150.60px;top:572.40px;width:235.00px;height:12.50px;background:#5c5c5c;border-radius:3px"></div>
<div class="a" style="left:153.00px;top:574.30px;width:7.60px;height:8.00px;background:#9a9a9a;border-radius:2px"></div>
<div class="t" style="left:164.00px;top:575.33px;font-size:7px;color:#e0e0e0;">1</div>
<div class="t" style="left:362.50px;top:575.62px;font-size:6.8px;color:#e0e0e0;">120</div>
<div class="a" style="left:377.30px;top:574.30px;width:7.60px;height:8.00px;background:#9a9a9a;border-radius:2px"></div>
<div class="a" style="left:538.00px;top:572.40px;width:50.00px;height:12.70px;background:#2b2b2b;"></div>
<div class="t" style="left:541.00px;top:575.33px;font-size:7px;color:#e0e0e0;">120</div>
<div class="a" style="left:592.80px;top:572.40px;width:50.00px;height:12.70px;background:#2b2b2b;"></div>
<div class="t" style="left:596.00px;top:575.33px;font-size:7px;color:#e0e0e0;">200</div>
<div class="a" style="left:32.00px;top:587.80px;width:960.00px;height:2.00px;background:#3a3a3a;"></div>
<div class="t" style="left:454.70px;top:594.93px;font-size:7px;color:#e0e0e0;">MEL</div>
<div class="a" style="left:474.00px;top:592.50px;width:113.50px;height:12.20px;background:#2b2b2b;"></div>
<div class="a" style="left:592.00px;top:593.20px;width:381.00px;height:10.40px;background:#2b2b2b;"></div>
<svg class="a" style="left:212px;top:134px" width="503.5" height="407.5" viewBox="212 134 503.5 407.5"><defs><linearGradient id="fl" x1="0" y1="292" x2="0" y2="446" gradientUnits="userSpaceOnUse"><stop offset="0" stop-color="#000"/><stop offset="0.24" stop-color="#000"/><stop offset="0.4" stop-color="#444"/><stop offset="0.59" stop-color="#b0b0b0"/><stop offset="0.75" stop-color="#d6d6d6"/><stop offset="1" stop-color="#e8e8e8"/></linearGradient><linearGradient id="ofl" x1="0" y1="292" x2="0" y2="541" gradientUnits="userSpaceOnUse"><stop offset="0" stop-color="#8c8c8c"/><stop offset="0.16" stop-color="#8e8e8e"/><stop offset="0.35" stop-color="#b9b9b9"/><stop offset="1" stop-color="#c6c6c6"/></linearGradient><linearGradient id="cubef" x1="379" y1="0" x2="492" y2="0" gradientUnits="userSpaceOnUse"><stop offset="0" stop-color="#2a2828"/><stop offset="0.29" stop-color="#58545c"/><stop offset="0.35" stop-color="#55559a"/><stop offset="0.5" stop-color="#6464ac"/><stop offset="0.6" stop-color="#50509c"/><stop offset="1" stop-color="#383874"/></linearGradient><linearGradient id="shw" x1="596" y1="424" x2="616" y2="378" gradientUnits="userSpaceOnUse"><stop offset="0" stop-color="#000" stop-opacity="0.95"/><stop offset="0.45" stop-color="#000" stop-opacity="0.55"/><stop offset="1" stop-color="#000" stop-opacity="0"/></linearGradient><linearGradient id="shw2" x1="0" y1="380" x2="0" y2="430" gradientUnits="userSpaceOnUse"><stop offset="0" stop-color="#000" stop-opacity="0"/><stop offset="1" stop-color="#000" stop-opacity="1"/></linearGradient><radialGradient id="liq" cx="520" cy="365" r="75" gradientUnits="userSpaceOnUse"><stop offset="0" stop-color="#2e2a1c"/><stop offset="0.55" stop-color="#0c0b10"/><stop offset="1" stop-color="#06061e"/></radialGradient><clipPath id="gate"><rect x="270.75" y="228.5" width="386.25" height="217.5"/></clipPath></defs><linearGradient id="lo" x1="0" y1="292" x2="0" y2="446" gradientUnits="userSpaceOnUse"><stop offset="0" stop-color="#8c8c8c"/><stop offset="0.25" stop-color="#939393"/><stop offset="0.45" stop-color="#ababab"/><stop offset="0.7" stop-color="#c8c8c8"/><stop offset="1" stop-color="#dcdcdc"/></linearGradient><linearGradient id="ro" x1="0" y1="292" x2="0" y2="446" gradientUnits="userSpaceOnUse"><stop offset="0" stop-color="#8c8c8c"/><stop offset="0.28" stop-color="#909090"/><stop offset="0.42" stop-color="#b6b6b6"/><stop offset="0.62" stop-color="#b6b6b6"/><stop offset="1" stop-color="#a4a4a4"/></linearGradient><linearGradient id="bo" x1="212" y1="0" x2="716" y2="0" gradientUnits="userSpaceOnUse"><stop offset="0" stop-color="#dfdfdf"/><stop offset="0.24" stop-color="#dcdcdc"/><stop offset="0.37" stop-color="#d2d2d2"/><stop offset="0.61" stop-color="#bdbdbd"/><stop offset="0.77" stop-color="#aaaaaa"/><stop offset="1" stop-color="#9e9e9e"/></linearGradient><rect x="212" y="134" width="504" height="158.4" fill="#979797"/><rect x="212" y="292.4" width="59" height="154" fill="url(#lo)"/><rect x="657" y="292.4" width="59" height="154" fill="url(#ro)"/><rect x="212" y="446" width="504" height="96" fill="url(#bo)"/><path d="M657 378 L716 364 L716 391 L657 402 Z" fill="#000" opacity="0.05"/><line x1="294" y1="134" x2="213" y2="207" stroke="#bc9292" stroke-width="0.6"/><line x1="213" y1="208" x2="244.5" y2="358" stroke="#bc9292" stroke-width="0.6"/><line x1="244.5" y1="358" x2="271.7" y2="292.3" stroke="#bc9292" stroke-width="0.6"/><line x1="211" y1="353.7" x2="244.5" y2="358" stroke="#bc9292" stroke-width="0.6"/><line x1="213" y1="208" x2="271" y2="246" stroke="#bc9292" stroke-width="0.6"/><line x1="670" y1="209.2" x2="716" y2="193.8" stroke="#bc9292" stroke-width="0.6"/><line x1="670" y1="209.2" x2="716" y2="241.5" stroke="#bc9292" stroke-width="0.6"/><line x1="670" y1="209.2" x2="710" y2="298.5" stroke="#bc9292" stroke-width="0.6"/><line x1="710" y1="298.5" x2="716" y2="286" stroke="#bc9292" stroke-width="0.6"/><line x1="677.7" y1="280" x2="716" y2="258.5" stroke="#bc9292" stroke-width="0.6"/><line x1="337" y1="141.7" x2="300" y2="228.5" stroke="#bc9292" stroke-width="0.6"/><g clip-path="url(#gate)"><rect x="270" y="228" width="388" height="64.3" fill="#5c5c5c"/><rect x="270" y="292.3" width="388" height="154" fill="url(#fl)"/><linearGradient id="rd" x1="480" y1="0" x2="657" y2="0" gradientUnits="userSpaceOnUse"><stop offset="0" stop-color="#000" stop-opacity="0"/><stop offset="1" stop-color="#000" stop-opacity="0.16"/></linearGradient><path d="M553 426 L657 402 L657 446 L480 446Z" fill="url(#rd)"/><linearGradient id="rk" x1="0" y1="292" x2="0" y2="366" gradientUnits="userSpaceOnUse"><stop offset="0" stop-color="#000" stop-opacity="1"/><stop offset="0.62" stop-color="#000" stop-opacity="0.95"/><stop offset="0.8" stop-color="#000" stop-opacity="0.45"/><stop offset="1" stop-color="#000" stop-opacity="0"/></linearGradient><linearGradient id="rkm" x1="440" y1="0" x2="580" y2="0" gradientUnits="userSpaceOnUse"><stop offset="0" stop-color="#fff" stop-opacity="0"/><stop offset="1" stop-color="#fff" stop-opacity="1"/></linearGradient><mask id="rkmask" maskUnits="userSpaceOnUse" x="270" y="290" width="400" height="80"><rect x="270" y="290" width="400" height="80" fill="url(#rkm)"/></mask><rect x="440" y="292" width="220" height="74" fill="url(#rk)" mask="url(#rkmask)"/><path d="M553 426 L716 391 L716 335 L640 355 L582 372 L560 400 Z" fill="url(#shw)"/><line x1="337" y1="141.7" x2="270" y2="298" stroke="#b03a3a" stroke-width="0.9"/><line x1="213" y1="208" x2="315.4" y2="280.9" stroke="#b03a3a" stroke-width="0.9"/><line x1="270" y1="292.3" x2="657" y2="290" stroke="#1a1a8c" stroke-width="0.7"/><line x1="270" y1="299" x2="380" y2="297" stroke="#1a1a8c" stroke-width="0.7"/><line x1="270" y1="307" x2="380" y2="302" stroke="#1a1a8c" stroke-width="0.7"/><line x1="270" y1="328" x2="380" y2="318" stroke="#1a1a8c" stroke-width="0.7"/><line x1="270" y1="299" x2="360" y2="337" stroke="#1a1a8c" stroke-width="0.7"/><line x1="212" y1="428" x2="657" y2="352" stroke="#1a1a8c" stroke-width="0.7"/><line x1="540" y1="420" x2="596" y2="446" stroke="#1a1a8c" stroke-width="0.7"/><line x1="580" y1="296" x2="657" y2="296" stroke="#1a1a8c" stroke-width="0.7"/><line x1="580" y1="305" x2="657" y2="310" stroke="#1a1a8c" stroke-width="0.7"/><line x1="580" y1="317" x2="657" y2="328" stroke="#1a1a8c" stroke-width="0.7"/><ellipse cx="408" cy="381" rx="52" ry="20" transform="rotate(-25 408 381)" fill="#000"/><ellipse cx="378" cy="400" rx="26" ry="5.5" fill="#000"/><rect x="379" y="290.7" width="113" height="96.2" fill="url(#cubef)"/><rect x="433" y="290.7" width="59" height="30" fill="#3a3a3a" opacity="0.25"/><filter id="bl" x="-50%" y="-50%" width="200%" height="200%"><feGaussianBlur stdDeviation="3"/></filter><ellipse cx="424" cy="378" rx="20" ry="30" fill="#000" filter="url(#bl)"/><rect x="379" y="350" width="30" height="37" fill="#000" opacity="0.35" filter="url(#bl)"/><line x1="379.0" y1="290.7" x2="379.0" y2="386.9" stroke="#12127a" stroke-width="0.7"/><line x1="393.7" y1="290.7" x2="393.7" y2="386.9" stroke="#12127a" stroke-width="0.7"/><line x1="404.5" y1="290.7" x2="404.5" y2="386.9" stroke="#12127a" stroke-width="0.7"/><line x1="411.0" y1="290.7" x2="411.0" y2="386.9" stroke="#12127a" stroke-width="0.7"/><line x1="414.0" y1="290.7" x2="414.0" y2="386.9" stroke="#12127a" stroke-width="0.7"/><line x1="428.0" y1="290.7" x2="428.0" y2="386.9" stroke="#12127a" stroke-width="0.7"/><line x1="434.6" y1="290.7" x2="434.6" y2="386.9" stroke="#12127a" stroke-width="0.7"/><line x1="446.0" y1="290.7" x2="446.0" y2="386.9" stroke="#12127a" stroke-width="0.7"/><line x1="460.0" y1="290.7" x2="460.0" y2="386.9" stroke="#12127a" stroke-width="0.7"/><line x1="475.0" y1="290.7" x2="475.0" y2="386.9" stroke="#12127a" stroke-width="0.7"/><line x1="491.5" y1="290.7" x2="491.5" y2="386.9" stroke="#12127a" stroke-width="0.7"/><line x1="379" y1="290.7" x2="492" y2="290.7" stroke="#12127a" stroke-width="0.7"/><line x1="379" y1="305.9" x2="492" y2="305.9" stroke="#12127a" stroke-width="0.7"/><line x1="379" y1="326.3" x2="492" y2="326.3" stroke="#12127a" stroke-width="0.7"/><line x1="379" y1="342.5" x2="492" y2="342.5" stroke="#12127a" stroke-width="0.7"/><line x1="379" y1="357.6" x2="492" y2="357.6" stroke="#12127a" stroke-width="0.7"/><line x1="379" y1="386.9" x2="492" y2="386.9" stroke="#12127a" stroke-width="0.7"/><ellipse cx="501" cy="411" rx="73" ry="19" fill="#000"/><line x1="500" y1="411" x2="570.0" y2="411.0" stroke="#10107a" stroke-width="0.5"/><line x1="500" y1="411" x2="567.6" y2="415.9" stroke="#10107a" stroke-width="0.5"/><line x1="500" y1="411" x2="560.6" y2="420.5" stroke="#10107a" stroke-width="0.5"/><line x1="500" y1="411" x2="549.5" y2="424.4" stroke="#10107a" stroke-width="0.5"/><line x1="500" y1="411" x2="535.0" y2="427.5" stroke="#10107a" stroke-width="0.5"/><line x1="500" y1="411" x2="518.1" y2="429.4" stroke="#10107a" stroke-width="0.5"/><line x1="500" y1="411" x2="500.0" y2="430.0" stroke="#10107a" stroke-width="0.5"/><line x1="500" y1="411" x2="481.9" y2="429.4" stroke="#10107a" stroke-width="0.5"/><line x1="500" y1="411" x2="465.0" y2="427.5" stroke="#10107a" stroke-width="0.5"/><line x1="500" y1="411" x2="450.5" y2="424.4" stroke="#10107a" stroke-width="0.5"/><line x1="500" y1="411" x2="439.4" y2="420.5" stroke="#10107a" stroke-width="0.5"/><line x1="500" y1="411" x2="432.4" y2="415.9" stroke="#10107a" stroke-width="0.5"/><line x1="500" y1="411" x2="430.0" y2="411.0" stroke="#10107a" stroke-width="0.5"/><line x1="500" y1="411" x2="432.4" y2="406.1" stroke="#10107a" stroke-width="0.5"/><line x1="500" y1="411" x2="439.4" y2="401.5" stroke="#10107a" stroke-width="0.5"/><line x1="500" y1="411" x2="450.5" y2="397.6" stroke="#10107a" stroke-width="0.5"/><line x1="500" y1="411" x2="465.0" y2="394.5" stroke="#10107a" stroke-width="0.5"/><line x1="500" y1="411" x2="481.9" y2="392.6" stroke="#10107a" stroke-width="0.5"/><line x1="500" y1="411" x2="500.0" y2="392.0" stroke="#10107a" stroke-width="0.5"/><line x1="500" y1="411" x2="518.1" y2="392.6" stroke="#10107a" stroke-width="0.5"/><line x1="500" y1="411" x2="535.0" y2="394.5" stroke="#10107a" stroke-width="0.5"/><line x1="500" y1="411" x2="549.5" y2="397.6" stroke="#10107a" stroke-width="0.5"/><line x1="500" y1="411" x2="560.6" y2="401.5" stroke="#10107a" stroke-width="0.5"/><line x1="500" y1="411" x2="567.6" y2="406.1" stroke="#10107a" stroke-width="0.5"/><ellipse cx="500" cy="411" rx="45" ry="11" fill="none" stroke="#10107a" stroke-width="0.5"/><line x1="581.5" y1="255.0" x2="581.5" y2="400.0" stroke="#0c0c78" stroke-width="0.8"/><line x1="580.6" y1="255.7" x2="580.6" y2="401.6" stroke="#0c0c78" stroke-width="0.8"/><line x1="577.8" y1="256.4" x2="577.8" y2="403.1" stroke="#0c0c78" stroke-width="0.8"/><line x1="573.2" y1="257.0" x2="573.2" y2="404.5" stroke="#0c0c78" stroke-width="0.8"/><line x1="566.9" y1="257.6" x2="566.9" y2="405.9" stroke="#0c0c78" stroke-width="0.8"/><line x1="559.1" y1="258.2" x2="559.1" y2="407.1" stroke="#0c0c78" stroke-width="0.8"/><line x1="550.0" y1="258.6" x2="550.0" y2="408.1" stroke="#0c0c78" stroke-width="0.8"/><line x1="539.7" y1="259.0" x2="539.7" y2="408.9" stroke="#0c0c78" stroke-width="0.8"/><line x1="528.6" y1="259.3" x2="528.6" y2="409.5" stroke="#0c0c78" stroke-width="0.8"/><line x1="517.0" y1="259.4" x2="517.0" y2="409.9" stroke="#0c0c78" stroke-width="0.8"/><line x1="505.0" y1="259.5" x2="505.0" y2="410.0" stroke="#0c0c78" stroke-width="0.8"/><line x1="493.0" y1="259.4" x2="493.0" y2="409.9" stroke="#0c0c78" stroke-width="0.8"/><line x1="481.4" y1="259.3" x2="481.4" y2="409.5" stroke="#0c0c78" stroke-width="0.8"/><line x1="470.3" y1="259.0" x2="470.3" y2="408.9" stroke="#0c0c78" stroke-width="0.8"/><line x1="460.0" y1="258.6" x2="460.0" y2="408.1" stroke="#0c0c78" stroke-width="0.8"/><line x1="450.9" y1="258.2" x2="450.9" y2="407.1" stroke="#0c0c78" stroke-width="0.8"/><line x1="443.1" y1="257.6" x2="443.1" y2="405.9" stroke="#0c0c78" stroke-width="0.8"/><line x1="436.8" y1="257.0" x2="436.8" y2="404.5" stroke="#0c0c78" stroke-width="0.8"/><line x1="432.2" y1="256.4" x2="432.2" y2="403.1" stroke="#0c0c78" stroke-width="0.8"/><line x1="429.4" y1="255.7" x2="429.4" y2="401.6" stroke="#0c0c78" stroke-width="0.8"/><line x1="428.5" y1="255.0" x2="428.5" y2="400.0" stroke="#0c0c78" stroke-width="0.8"/><ellipse cx="505" cy="255" rx="76.5" ry="4.5" fill="none" stroke="#0c0c78" stroke-width="1.1"/><ellipse cx="505" cy="276.5" rx="76.5" ry="1.6" fill="none" stroke="#0c0c78" stroke-width="1.1"/><ellipse cx="505" cy="283.5" rx="76.5" ry="1.8" fill="none" stroke="#0c0c78" stroke-width="1.1"/><ellipse cx="505" cy="400" rx="76.5" ry="10" fill="none" stroke="#0c0c78" stroke-width="1.1"/><path d="M434.2 323 L434.2 396 A68 9 0 0 0 570.2 396 L570.2 323 Z" fill="url(#liq)"/><ellipse cx="502.2" cy="323" rx="68" ry="8.3" fill="#0c0c48"/><ellipse cx="502.2" cy="323" rx="8.5" ry="1.04" fill="none" stroke="#14147c" stroke-width="0.6"/><ellipse cx="502.2" cy="323" rx="17.0" ry="2.08" fill="none" stroke="#14147c" stroke-width="0.6"/><ellipse cx="502.2" cy="323" rx="25.5" ry="3.11" fill="none" stroke="#14147c" stroke-width="0.6"/><ellipse cx="502.2" cy="323" rx="34.0" ry="4.15" fill="none" stroke="#14147c" stroke-width="0.6"/><ellipse cx="502.2" cy="323" rx="42.5" ry="5.19" fill="none" stroke="#14147c" stroke-width="0.6"/><ellipse cx="502.2" cy="323" rx="51.0" ry="6.23" fill="none" stroke="#14147c" stroke-width="0.6"/><ellipse cx="502.2" cy="323" rx="59.5" ry="7.26" fill="none" stroke="#14147c" stroke-width="0.6"/><line x1="502.2" y1="323" x2="570.2" y2="323.0" stroke="#14147c" stroke-width="0.5"/><line x1="502.2" y1="323" x2="565.0" y2="326.2" stroke="#14147c" stroke-width="0.5"/><line x1="502.2" y1="323" x2="550.3" y2="328.9" stroke="#14147c" stroke-width="0.5"/><line x1="502.2" y1="323" x2="528.2" y2="330.7" stroke="#14147c" stroke-width="0.5"/><line x1="502.2" y1="323" x2="502.2" y2="331.3" stroke="#14147c" stroke-width="0.5"/><line x1="502.2" y1="323" x2="476.2" y2="330.7" stroke="#14147c" stroke-width="0.5"/><line x1="502.2" y1="323" x2="454.1" y2="328.9" stroke="#14147c" stroke-width="0.5"/><line x1="502.2" y1="323" x2="439.4" y2="326.2" stroke="#14147c" stroke-width="0.5"/><line x1="502.2" y1="323" x2="434.2" y2="323.0" stroke="#14147c" stroke-width="0.5"/><line x1="502.2" y1="323" x2="439.4" y2="319.8" stroke="#14147c" stroke-width="0.5"/><line x1="502.2" y1="323" x2="454.1" y2="317.1" stroke="#14147c" stroke-width="0.5"/><line x1="502.2" y1="323" x2="476.2" y2="315.3" stroke="#14147c" stroke-width="0.5"/><line x1="502.2" y1="323" x2="502.2" y2="314.7" stroke="#14147c" stroke-width="0.5"/><line x1="502.2" y1="323" x2="528.2" y2="315.3" stroke="#14147c" stroke-width="0.5"/><line x1="502.2" y1="323" x2="550.3" y2="317.1" stroke="#14147c" stroke-width="0.5"/><line x1="502.2" y1="323" x2="565.0" y2="319.8" stroke="#14147c" stroke-width="0.5"/><line x1="570.2" y1="323.0" x2="570.2" y2="396.0" stroke="#10107c" stroke-width="0.7"/><line x1="569.8" y1="323.9" x2="569.8" y2="397.0" stroke="#10107c" stroke-width="0.7"/><line x1="568.5" y1="324.8" x2="568.5" y2="398.0" stroke="#10107c" stroke-width="0.7"/><line x1="566.4" y1="325.7" x2="566.4" y2="399.0" stroke="#10107c" stroke-width="0.7"/><line x1="563.5" y1="326.6" x2="563.5" y2="399.9" stroke="#10107c" stroke-width="0.7"/><line x1="559.8" y1="327.4" x2="559.8" y2="400.8" stroke="#10107c" stroke-width="0.7"/><line x1="555.4" y1="328.2" x2="555.4" y2="401.6" stroke="#10107c" stroke-width="0.7"/><line x1="550.3" y1="328.9" x2="550.3" y2="402.4" stroke="#10107c" stroke-width="0.7"/><line x1="544.6" y1="329.5" x2="544.6" y2="403.0" stroke="#10107c" stroke-width="0.7"/><line x1="538.4" y1="330.0" x2="538.4" y2="403.6" stroke="#10107c" stroke-width="0.7"/><line x1="531.7" y1="330.5" x2="531.7" y2="404.1" stroke="#10107c" stroke-width="0.7"/><line x1="524.7" y1="330.8" x2="524.7" y2="404.5" stroke="#10107c" stroke-width="0.7"/><line x1="517.3" y1="331.1" x2="517.3" y2="404.8" stroke="#10107c" stroke-width="0.7"/><line x1="509.8" y1="331.2" x2="509.8" y2="404.9" stroke="#10107c" stroke-width="0.7"/><line x1="502.2" y1="331.3" x2="502.2" y2="405.0" stroke="#10107c" stroke-width="0.7"/><line x1="494.6" y1="331.2" x2="494.6" y2="404.9" stroke="#10107c" stroke-width="0.7"/><line x1="487.1" y1="331.1" x2="487.1" y2="404.8" stroke="#10107c" stroke-width="0.7"/><line x1="479.7" y1="330.8" x2="479.7" y2="404.5" stroke="#10107c" stroke-width="0.7"/><line x1="472.7" y1="330.5" x2="472.7" y2="404.1" stroke="#10107c" stroke-width="0.7"/><line x1="466.0" y1="330.0" x2="466.0" y2="403.6" stroke="#10107c" stroke-width="0.7"/><line x1="459.8" y1="329.5" x2="459.8" y2="403.0" stroke="#10107c" stroke-width="0.7"/><line x1="454.1" y1="328.9" x2="454.1" y2="402.4" stroke="#10107c" stroke-width="0.7"/><line x1="449.0" y1="328.2" x2="449.0" y2="401.6" stroke="#10107c" stroke-width="0.7"/><line x1="444.6" y1="327.4" x2="444.6" y2="400.8" stroke="#10107c" stroke-width="0.7"/><line x1="440.9" y1="326.6" x2="440.9" y2="399.9" stroke="#10107c" stroke-width="0.7"/><line x1="438.0" y1="325.7" x2="438.0" y2="399.0" stroke="#10107c" stroke-width="0.7"/><line x1="435.9" y1="324.8" x2="435.9" y2="398.0" stroke="#10107c" stroke-width="0.7"/><line x1="434.6" y1="323.9" x2="434.6" y2="397.0" stroke="#10107c" stroke-width="0.7"/><line x1="434.2" y1="323.0" x2="434.2" y2="396.0" stroke="#10107c" stroke-width="0.7"/><path d="M434.2 323.0 A68 8.5 0 0 0 570.2 323.0" fill="none" stroke="#10107c" stroke-width="0.7"/><path d="M434.2 329.1 A68 8.5 0 0 0 570.2 329.1" fill="none" stroke="#10107c" stroke-width="0.7"/><path d="M434.2 335.2 A68 8.5 0 0 0 570.2 335.2" fill="none" stroke="#10107c" stroke-width="0.7"/><path d="M434.2 341.3 A68 8.5 0 0 0 570.2 341.3" fill="none" stroke="#10107c" stroke-width="0.7"/><path d="M434.2 347.4 A68 8.5 0 0 0 570.2 347.4" fill="none" stroke="#10107c" stroke-width="0.7"/><path d="M434.2 353.5 A68 8.5 0 0 0 570.2 353.5" fill="none" stroke="#10107c" stroke-width="0.7"/><path d="M434.2 359.6 A68 8.5 0 0 0 570.2 359.6" fill="none" stroke="#10107c" stroke-width="0.7"/><path d="M434.2 365.7 A68 8.5 0 0 0 570.2 365.7" fill="none" stroke="#10107c" stroke-width="0.7"/><path d="M434.2 371.8 A68 8.5 0 0 0 570.2 371.8" fill="none" stroke="#10107c" stroke-width="0.7"/><path d="M434.2 377.9 A68 8.5 0 0 0 570.2 377.9" fill="none" stroke="#10107c" stroke-width="0.7"/><path d="M434.2 384.0 A68 8.5 0 0 0 570.2 384.0" fill="none" stroke="#10107c" stroke-width="0.7"/><path d="M434.2 390.1 A68 8.5 0 0 0 570.2 390.1" fill="none" stroke="#10107c" stroke-width="0.7"/><path d="M434.2 396.2 A68 8.5 0 0 0 570.2 396.2" fill="none" stroke="#10107c" stroke-width="0.7"/><linearGradient id="lqe" x1="434" y1="0" x2="571" y2="0" gradientUnits="userSpaceOnUse"><stop offset="0" stop-color="#0e0e66" stop-opacity="0.9"/><stop offset="0.08" stop-color="#0e0e66" stop-opacity="0.1"/><stop offset="0.9" stop-color="#0e0e66" stop-opacity="0.1"/><stop offset="1" stop-color="#0e0e66" stop-opacity="0.9"/></linearGradient><path d="M434.2 323 L434.2 396 A68 9 0 0 0 570.2 396 L570.2 323 Z" fill="url(#lqe)"/><path d="M434.2 390 A68 12 0 0 0 570.2 390 L570.2 396 A68 10 0 0 1 434.2 396Z" fill="#0a0a55"/><path d="M461 251 L486 251.5 L485 299 L466 302 Z" fill="#e4e4e8"/><line x1="473" y1="251" x2="473.5" y2="301" stroke="#9a9ab0" stroke-width="0.6"/><path d="M571.5 255 L580 254 L579.5 296.8 L571 296 Z" fill="#e8e8ee"/><path d="M512.7 260.8 L530 261 L529 269 L513 268.5 Z" fill="#d8d8dc"/><circle cx="369" cy="368" r="37" fill="#000"/><path d="M348.55 337.17 A20.45 6.14 0 0 0 389.45 337.17" fill="none" stroke="#3ee48c" stroke-width="0.6"/><path d="M341.42 343.33 A27.58 8.27 0 0 0 396.58 343.33" fill="none" stroke="#3ee48c" stroke-width="0.6"/><path d="M336.96 349.50 A32.04 9.61 0 0 0 401.04 349.50" fill="none" stroke="#3ee48c" stroke-width="0.6"/><path d="M334.12 355.67 A34.88 10.47 0 0 0 403.88 355.67" fill="none" stroke="#3ee48c" stroke-width="0.6"/><path d="M332.52 361.83 A36.48 10.94 0 0 0 405.48 361.83" fill="none" stroke="#3ee48c" stroke-width="0.6"/><path d="M332.00 368.00 A37.00 11.10 0 0 0 406.00 368.00" fill="none" stroke="#3ee48c" stroke-width="0.6"/><path d="M332.52 374.17 A36.48 10.94 0 0 0 405.48 374.17" fill="none" stroke="#3ee48c" stroke-width="0.6"/><path d="M334.12 380.33 A34.88 10.47 0 0 0 403.88 380.33" fill="none" stroke="#3ee48c" stroke-width="0.6"/><path d="M336.96 386.50 A32.04 9.61 0 0 0 401.04 386.50" fill="none" stroke="#3ee48c" stroke-width="0.6"/><path d="M341.42 392.67 A27.58 8.27 0 0 0 396.58 392.67" fill="none" stroke="#3ee48c" stroke-width="0.6"/><path d="M348.55 398.83 A20.45 6.14 0 0 0 389.45 398.83" fill="none" stroke="#3ee48c" stroke-width="0.6"/><path d="M369 331 A35.50 37 0 0 0 369 405" fill="none" stroke="#3ee48c" stroke-width="0.6"/><path d="M369 331 A31.13 37 0 0 0 369 405" fill="none" stroke="#3ee48c" stroke-width="0.6"/><path d="M369 331 A24.23 37 0 0 0 369 405" fill="none" stroke="#3ee48c" stroke-width="0.6"/><path d="M369 331 A15.37 37 0 0 0 369 405" fill="none" stroke="#3ee48c" stroke-width="0.6"/><path d="M369 331 A5.27 37 0 0 0 369 405" fill="none" stroke="#3ee48c" stroke-width="0.6"/><path d="M369 331 A5.27 37 0 0 1 369 405" fill="none" stroke="#3ee48c" stroke-width="0.6"/><path d="M369 331 A15.37 37 0 0 1 369 405" fill="none" stroke="#3ee48c" stroke-width="0.6"/><path d="M369 331 A24.23 37 0 0 1 369 405" fill="none" stroke="#3ee48c" stroke-width="0.6"/><path d="M369 331 A31.13 37 0 0 1 369 405" fill="none" stroke="#3ee48c" stroke-width="0.6"/><path d="M369 331 A35.50 37 0 0 1 369 405" fill="none" stroke="#3ee48c" stroke-width="0.6"/><circle cx="369" cy="368" r="37" fill="none" stroke="#3ee48c" stroke-width="0.9"/></g><line x1="212" y1="428" x2="270.75" y2="418" stroke="#6a6a8a" stroke-width="0.7"/><line x1="657" y1="352" x2="716" y2="343" stroke="#6a6a8a" stroke-width="0.7"/><line x1="596" y1="446" x2="716" y2="501" stroke="#8a8aa0" stroke-width="0.6"/></svg>
<svg class="a" style="left:56.4px;top:84.8px;" width="18" height="18" viewBox="0 0 18 18"><rect x="5.3" y="5.3" width="7.4" height="7.4" fill="#d2be2e"/><rect x="14.85" y="8.45" width="1.1" height="1.1" fill="#bdbdbd"/><rect x="12.98" y="12.98" width="1.1" height="1.1" fill="#bdbdbd"/><rect x="8.45" y="14.85" width="1.1" height="1.1" fill="#bdbdbd"/><rect x="3.92" y="12.98" width="1.1" height="1.1" fill="#bdbdbd"/><rect x="2.05" y="8.45" width="1.1" height="1.1" fill="#bdbdbd"/><rect x="3.92" y="3.92" width="1.1" height="1.1" fill="#bdbdbd"/><rect x="8.45" y="2.05" width="1.1" height="1.1" fill="#bdbdbd"/><rect x="12.98" y="3.92" width="1.1" height="1.1" fill="#bdbdbd"/></svg>
<svg class="a" style="left:76.3px;top:84.8px;" width="18" height="18" viewBox="0 0 18 18"><path d="M9 3.8 L13.6 6.4 L13.6 11.6 L9 14.2 L4.4 11.6 L4.4 6.4Z" fill="#d2be2e"/><path d="M4.4 6.4 L9 9 L13.6 6.4 M9 9 L9 14.2" stroke="#6a5e10" stroke-width="0.6" fill="none"/><rect x="15.65" y="8.45" width="1.1" height="1.1" fill="#bdbdbd"/><rect x="13.54" y="13.54" width="1.1" height="1.1" fill="#bdbdbd"/><rect x="8.45" y="15.65" width="1.1" height="1.1" fill="#bdbdbd"/><rect x="3.36" y="13.54" width="1.1" height="1.1" fill="#bdbdbd"/><rect x="1.25" y="8.45" width="1.1" height="1.1" fill="#bdbdbd"/><rect x="3.36" y="3.36" width="1.1" height="1.1" fill="#bdbdbd"/><rect x="8.45" y="1.25" width="1.1" height="1.1" fill="#bdbdbd"/><rect x="13.54" y="3.36" width="1.1" height="1.1" fill="#bdbdbd"/></svg>
<svg class="a" style="left:96.4px;top:84.8px;" width="18" height="18" viewBox="0 0 18 18"><path d="M6 3 L12 3 A3 2.4 0 0 1 6 3Z" fill="#d2be2e"/><path d="M9 6 L9 15.5 M8 6.5 L2.5 11.5 M10 6.5 L15.5 11.5" stroke="#c8c8c8" stroke-width="1"/><path d="M3 14 L5 12 M15 14 L13 12" stroke="#c8c8c8" stroke-width="0.6"/></svg>
<svg class="a" style="left:116.6px;top:84.8px;" width="18" height="18" viewBox="0 0 18 18"><circle cx="9" cy="9.5" r="6.6" fill="none" stroke="#c8c8c8" stroke-width="0.8"/><path d="M2.4 9.5 A6.6 6.6 0 0 1 15.6 9.5Z" fill="none" stroke="#d2be2e" stroke-width="1"/><path d="M9 2.9 L9 16 M5 4.5 A3 7 0 0 0 5 14.5 M13 4.5 A3 7 0 0 1 13 14.5 M3 6.5 L15 6.5 M2.6 12.5 L15.4 12.5" stroke="#c8c8c8" stroke-width="0.6" fill="none"/><path d="M2 9.5 L16 9.5" stroke="#d2be2e" stroke-width="1.2"/></svg>
<svg class="a" style="left:136.5px;top:84.8px;" width="18" height="18" viewBox="0 0 18 18"><circle cx="9" cy="9.5" r="6.6" fill="none" stroke="#c8c8c8" stroke-width="0.8"/><path d="M2.4 9.5 A6.6 6.6 0 0 1 15.6 9.5" fill="none" stroke="#d2be2e" stroke-width="1"/><path d="M2 9.5 L16 9.5" stroke="#d2be2e" stroke-width="1"/><rect x="5.5" y="6" width="7" height="7" fill="#cfcfcf"/></svg>
<svg class="a" style="left:156.4px;top:84.8px;" width="18" height="18" viewBox="0 0 18 18"><path d="M2.4 9.5 A6.6 6.6 0 0 0 15.6 9.5" fill="none" stroke="#c8c8c8" stroke-width="0.8"/><path d="M5 9 A4 4 0 0 1 13 9Z" fill="#d2be2e"/><rect x="2" y="8.6" width="14" height="1.6" fill="#d2be2e"/><rect x="14.55" y="7.35" width="1.3" height="1.3" fill="#d2be2e"/><rect x="10.27" y="13.25" width="1.3" height="1.3" fill="#d2be2e"/><rect x="3.33" y="10.99" width="1.3" height="1.3" fill="#d2be2e"/><rect x="3.33" y="3.71" width="1.3" height="1.3" fill="#d2be2e"/><rect x="10.27" y="1.45" width="1.3" height="1.3" fill="#d2be2e"/></svg>
<svg class="a" style="left:178.7px;top:85px;" width="2" height="18" viewBox="0 0 2 18"><rect x="0.4" y="0" width="1.2" height="18" fill="#9a9a9a"/></svg>
<svg class="a" style="left:184.6px;top:84.8px;" width="18" height="18" viewBox="0 0 18 18"><path d="M8 2.5 L13.5 5.6 L13.5 12 L8 15.2 L2.5 12 L2.5 5.6Z" fill="none" stroke="#c8c8c8" stroke-width="0.8"/><path d="M8 5.5 L11 7.2 L11 10.8 L8 12.5 L5 10.8 L5 7.2Z" fill="#3fb6c9"/><path d="M5 7.2 L8 9 L11 7.2 M8 9 L8 12.5" stroke="#1f6a78" stroke-width="0.5" fill="none"/><path d="M14.5 1 L14.5 6 M12 3.5 L17 3.5" stroke="#e6e6e6" stroke-width="1.1"/></svg>
<svg class="a" style="left:204.3px;top:84.8px;" width="18" height="18" viewBox="0 0 18 18"><path d="M8 2.5 L13.5 5.6 L13.5 12 L8 15.2 L2.5 12 L2.5 5.6Z" fill="none" stroke="#c8c8c8" stroke-width="0.8"/><path d="M8 5.5 L11 7.2 L11 10.8 L8 12.5 L5 10.8 L5 7.2Z" fill="#3fb6c9"/><path d="M5 7.2 L8 9 L11 7.2 M8 9 L8 12.5" stroke="#1f6a78" stroke-width="0.5" fill="none"/><path d="M11 13 L11 16 L13 16" stroke="#c8c8c8" stroke-width="0.6" fill="none"/><path d="M13 13.2 L15 13.2 L15 12 L17 14.2 L15 16.4 L15 15.2 L13 15.2Z" fill="#e6e6e6"/></svg>
<svg class="a" style="left:223.7px;top:84.8px;" width="18" height="18" viewBox="0 0 18 18"><circle cx="9" cy="9" r="6.5" fill="none" stroke="#aaa" stroke-width="0.8" stroke-dasharray="1.2 1"/><path d="M10.5 3.5 C6 4.5 7 7.5 9 9 C11 10.5 11 13 7.5 14.5" fill="none" stroke="#d2be2e" stroke-width="1.1"/></svg>
<svg class="a" style="left:243.7px;top:84.8px;" width="18" height="18" viewBox="0 0 18 18"><path d="M9 2.2 L15 5.6 L15 12.4 L9 15.8 L3 12.4 L3 5.6Z" fill="#3fb6c9"/><path d="M3.5 7 C6 6 8 8 11 7 S14 6 15 6.5 M3.5 10 C6 9 8 11 11 10 S14 9 15 9.5 M4 13 C6 12 8 14 11 13" stroke="#1d6c7a" stroke-width="0.7" fill="none"/></svg>
<svg class="a" style="left:265.2px;top:85px;" width="2" height="18" viewBox="0 0 2 18"><rect x="0.4" y="0" width="1.2" height="18" fill="#9a9a9a"/></svg>
<svg class="a" style="left:270.3px;top:84.8px;" width="18" height="18" viewBox="0 0 18 18"><rect x="2" y="2" width="14" height="14" fill="#3fb6c9"/><rect x="2" y="2" width="14" height="2" fill="#ddd"/><rect x="2.5" y="2.3" width="3" height="1.3" fill="#888"/><rect x="4" y="5.3" width="10" height="9.3" fill="#222"/><rect x="4.5" y="5.80" width="3" height="2.8" fill="#e0e0e0"/><rect x="4.5" y="11.40" width="3" height="2.8" fill="#e0e0e0"/><rect x="7.5" y="8.60" width="3" height="2.8" fill="#e0e0e0"/><rect x="10.5" y="5.80" width="3" height="2.8" fill="#e0e0e0"/><rect x="10.5" y="11.40" width="3" height="2.8" fill="#e0e0e0"/></svg>
<svg class="a" style="left:291.0px;top:84.8px;" width="18" height="18" viewBox="0 0 18 18"><rect x="2.0" y="2.0" width="4.6" height="4.6" fill="#d2be2e"/><rect x="2.0" y="11.2" width="4.6" height="4.6" fill="#d2be2e"/><rect x="6.6" y="6.6" width="4.6" height="4.6" fill="#d2be2e"/><rect x="11.2" y="2.0" width="4.6" height="4.6" fill="#d2be2e"/><rect x="11.2" y="11.2" width="4.6" height="4.6" fill="#d2be2e"/><circle cx="13.5" cy="4" r="2.6" fill="none" stroke="#ddd" stroke-width="0.8"/><rect x="11.3" y="1.6" width="4.6" height="4.6" fill="#444" opacity="0"/></svg>
<svg class="a" style="left:311.2px;top:84.8px;" width="18" height="18" viewBox="0 0 18 18"><rect x="2.0" y="2.0" width="4.6" height="4.6" fill="#d2be2e"/><rect x="2.0" y="11.2" width="4.6" height="4.6" fill="#d2be2e"/><rect x="6.6" y="6.6" width="4.6" height="4.6" fill="#d2be2e"/><rect x="11.2" y="2.0" width="4.6" height="4.6" fill="#d2be2e"/><rect x="11.2" y="11.2" width="4.6" height="4.6" fill="#d2be2e"/><path d="M11 11 L16 16 M16 11 L11 16" stroke="#e8e8e8" stroke-width="1.1"/></svg>
<svg class="a" style="left:332px;top:85px;" width="2" height="18" viewBox="0 0 2 18"><rect x="0.4" y="0" width="1.2" height="18" fill="#9a9a9a"/></svg>
<svg class="a" style="left:337.5px;top:84.8px;" width="18" height="18" viewBox="0 0 18 18"><path d="M2.5 14 L2.5 2.5 L15.5 2.5 L15.5 14 L11 14 M7 14 L2.5 14" stroke="#d2be2e" stroke-width="0.9" fill="none"/><path d="M7 14.3 L11 14.3 L9 16.3Z" fill="#d2be2e"/><rect x="4.5" y="8" width="5" height="4.5" fill="#cfcfcf"/><circle cx="11" cy="7.5" r="3" fill="#cfcfcf"/></svg>
<svg class="a" style="left:357.4px;top:84.8px;" width="18" height="18" viewBox="0 0 18 18"><path d="M2.5 14 L2.5 2.5 L15.5 2.5 L15.5 14 L11 14 M7 14 L2.5 14" stroke="#d2be2e" stroke-width="0.9" fill="none"/><path d="M7 14.3 L11 14.3 L9 16.3Z" fill="#d2be2e"/><rect x="5.0" y="5.0" width="2.2" height="2.2" fill="#ddd"/><rect x="5.0" y="10.4" width="2.2" height="2.2" fill="#ddd"/><rect x="7.7" y="7.7" width="2.2" height="2.2" fill="#ddd"/><rect x="10.4" y="5.0" width="2.2" height="2.2" fill="#ddd"/><rect x="10.4" y="10.4" width="2.2" height="2.2" fill="#ddd"/></svg>
<svg class="a" style="left:379px;top:85px;" width="2" height="18" viewBox="0 0 2 18"><rect x="0.4" y="0" width="1.2" height="18" fill="#9a9a9a"/></svg>
<svg class="a" style="left:384.3px;top:84.8px;" width="18" height="18" viewBox="0 0 18 18"><rect x="1.5" y="3" width="15" height="12" fill="none" stroke="#cfcfcf" stroke-width="1"/><path d="M1.5 4.3 L16.5 4.3 M1.5 13.7 L16.5 13.7" stroke="#cfcfcf" stroke-width="0.8" stroke-dasharray="0.8 0.8"/><ellipse cx="9" cy="9" rx="4.5" ry="2.6" fill="none" stroke="#ddd" stroke-width="0.9"/><circle cx="9" cy="9" r="1.4" fill="#ddd"/></svg>
<svg class="a" style="left:404.4px;top:84.8px;" width="18" height="18" viewBox="0 0 18 18"><rect x="1.5" y="3" width="15" height="12" fill="none" stroke="#cfcfcf" stroke-width="1"/><path d="M1.5 4.3 L16.5 4.3 M1.5 13.7 L16.5 13.7" stroke="#cfcfcf" stroke-width="0.8" stroke-dasharray="0.8 0.8"/><path d="M7 6 L12.5 9 L7 12Z" fill="#ddd"/></svg>
<svg class="a" style="left:40.3px;top:70.8px;" width="11" height="36" viewBox="0 0 11 36"><rect x="3" y="7.5" width="5" height="3.5" fill="#d8d8d8"/><circle cx="5.5" cy="27" r="2.2" fill="none" stroke="#cfcfcf" stroke-width="0.9"/></svg>
<svg class="a" style="left:979px;top:83px;" width="10" height="22" viewBox="0 0 10 22"><path d="M2 6 L5 3 L8 6Z" fill="#cfcfcf"/><circle cx="5" cy="11" r="2.5" fill="#555"/><path d="M2 16 L8 16 L5 19Z" fill="#cfcfcf"/></svg>
<svg class="a" style="left:86px;top:57px;" width="10" height="8" viewBox="0 0 10 8"><path d="M1.5 2 L8 2 L4.75 5.5Z" fill="#cfcfcf"/></svg>
<svg class="a" style="left:99.1px;top:54px;" width="3" height="13" viewBox="0 0 3 13"><path d="M1.5 0.5 L1.5 12.5" stroke="#6a6a6a" stroke-width="0.6"/><path d="M1.5 3 L1.5 10" stroke="#9a9a9a" stroke-width="1.2"/></svg>
<svg class="a" style="left:109.0px;top:53.5px;" width="14" height="14" viewBox="0 0 14 14"><path d="M3.5 2.5 L8.5 2.5 L11 5 L11 11.5 L3.5 11.5Z" fill="#d0d0d0"/><path d="M8.5 2.5 L8.5 5 L11 5" stroke="#888" stroke-width="0.5" fill="none"/></svg>
<svg class="a" style="left:121.6px;top:53.5px;" width="14" height="14" viewBox="0 0 14 14"><path d="M2.5 4 L6 4 L7 5 L11 5 L11 11 L2.5 11Z" fill="#bdbdbd"/><path d="M3.5 7 L12.5 7 L11 11 L2.5 11Z" fill="#d8d8d8"/></svg>
<svg class="a" style="left:134.6px;top:53.5px;" width="14" height="14" viewBox="0 0 14 14"><path d="M3 3 L10.5 3 L11.5 4 L11.5 11 L3 11Z" fill="#cfcfcf"/><rect x="5" y="3" width="4.5" height="3" fill="#555"/><rect x="5" y="8" width="4.5" height="3" fill="#555"/><rect x="6.5" y="8.8" width="1.5" height="1.6" fill="#cfcfcf"/></svg>
<svg class="a" style="left:147.5px;top:53.5px;" width="14" height="14" viewBox="0 0 14 14"><path d="M11 10 L11 8 A2.5 2.5 0 0 0 8.5 5.5 L4 5.5" stroke="#d8d8d8" stroke-width="1.1" fill="none"/><path d="M4.8 3.3 L2.3 5.5 L4.8 7.7Z" fill="#d8d8d8"/><path d="M11 10 L7 10" stroke="#d8d8d8" stroke-width="1.1"/></svg>
<svg class="a" style="left:161.0px;top:53.5px;" width="14" height="14" viewBox="0 0 14 14"><path d="M3 10 L3 8 A2.5 2.5 0 0 1 5.5 5.5 L10 5.5" stroke="#d8d8d8" stroke-width="1.1" fill="none"/><path d="M9.2 3.3 L11.7 5.5 L9.2 7.7Z" fill="#d8d8d8"/></svg>
<svg class="a" style="left:178.4px;top:55px;" width="4" height="11" viewBox="0 0 4 11"><path d="M1 1 L3 5.5 L1 10" stroke="#777" stroke-width="0.9" fill="none"/></svg>
<svg class="a" style="left:191.8px;top:54px;" width="3" height="13" viewBox="0 0 3 13"><path d="M1.5 0.5 L1.5 12.5" stroke="#6a6a6a" stroke-width="0.6"/><path d="M1.5 3 L1.5 10" stroke="#9a9a9a" stroke-width="1.2"/></svg>
<svg class="a" style="left:199.0px;top:53.5px;" width="14" height="14" viewBox="0 0 14 14"><rect x="1.5" y="1.5" width="3.5" height="3.5" fill="#ddd"/><rect x="1.5" y="7" width="3.5" height="3.5" fill="#ddd"/><path d="M6 2.5 L8.5 2.5 L8.5 7" stroke="#3fb6c9" stroke-width="0.9" fill="none"/><path d="M8 6 L8 13 L9.6 11.6 L11 14 L12 13.5 L10.8 11 L12.8 11Z" fill="#e0e0e0"/></svg>
<div class="a" style="left:212.80px;top:54.00px;width:13.20px;height:12.40px;background:#4f86ad;"></div>
<svg class="a" style="left:212.4px;top:53.5px;" width="14" height="14" viewBox="0 0 14 14"><rect x="4" y="1.5" width="6" height="6" fill="#3fb6c9"/><circle cx="4.5" cy="9.5" r="2.8" fill="#ddd"/><path d="M8 6 L8 13 L9.6 11.6 L11 14 L12 13.5 L10.8 11 L12.8 11Z" fill="#e8e8e8"/></svg>
<svg class="a" style="left:225.3px;top:53.5px;" width="14" height="14" viewBox="0 0 14 14"><rect x="1.5" y="1.5" width="3.5" height="3.5" fill="#ddd"/><rect x="6.5" y="1.5" width="3.5" height="3.5" fill="#ddd"/><rect x="1.5" y="6.5" width="3.5" height="3.5" fill="#ddd"/><path d="M7.5 6 L7.5 13 L9.1 11.6 L10.5 14 L11.5 13.5 L10.3 11 L12.3 11Z" fill="#e0e0e0"/></svg>
<svg class="a" style="left:243.6px;top:55px;" width="4" height="11" viewBox="0 0 4 11"><path d="M1 1 L3 5.5 L1 10" stroke="#777" stroke-width="0.9" fill="none"/></svg>
<svg class="a" style="left:256.5px;top:54px;" width="3" height="13" viewBox="0 0 3 13"><path d="M1.5 0.5 L1.5 12.5" stroke="#6a6a6a" stroke-width="0.6"/><path d="M1.5 3 L1.5 10" stroke="#9a9a9a" stroke-width="1.2"/></svg>
<svg class="a" style="left:264.8px;top:53.5px;" width="14" height="14" viewBox="0 0 14 14"><path d="M4.3 10.5 L4.3 6.5 A2.7 2.7 0 0 1 9.7 6.5 L9.7 10.5" stroke="#cfcfcf" stroke-width="1.15" fill="none" transform="rotate(-45 7 7) translate(-0.5 -1)"/><path d="M8 9 L13 9 M8 11.5 L13 11.5 M9.5 7.5 L9.5 13 M11.5 7.5 L11.5 13" stroke="#3fb6c9" stroke-width="0.7"/></svg>
<svg class="a" style="left:277.7px;top:53.5px;" width="14" height="14" viewBox="0 0 14 14"><path d="M4.3 10.5 L4.3 6.5 A2.7 2.7 0 0 1 9.7 6.5 L9.7 10.5" stroke="#cfcfcf" stroke-width="1.15" fill="none" transform="rotate(-45 7 7) translate(-0.5 -1)"/><path d="M5 12 C8 12 10 10 13 9" stroke="#3fb6c9" stroke-width="0.9" fill="none"/></svg>
<svg class="a" style="left:291.0px;top:53.5px;" width="14" height="14" viewBox="0 0 14 14"><path d="M4.3 10.5 L4.3 6.5 A2.7 2.7 0 0 1 9.7 6.5 L9.7 10.5" stroke="#cfcfcf" stroke-width="1.15" fill="none" transform="rotate(-45 7 7) translate(-0.5 -1)"/><circle cx="10.5" cy="11" r="1.3" fill="#3fb6c9"/></svg>
<svg class="a" style="left:303.9px;top:53.5px;" width="14" height="14" viewBox="0 0 14 14"><path d="M4.3 10.5 L4.3 6.5 A2.7 2.7 0 0 1 9.7 6.5 L9.7 10.5" stroke="#cfcfcf" stroke-width="1.15" fill="none" transform="rotate(-45 7 7) translate(-0.5 -1)"/><circle cx="12" cy="3" r="0.8" fill="#3fb6c9"/><circle cx="10" cy="9" r="0.8" fill="#3fb6c9"/><circle cx="13" cy="9" r="0.8" fill="#3fb6c9"/><circle cx="10" cy="12" r="0.8" fill="#3fb6c9"/></svg>
<svg class="a" style="left:317.1px;top:53.5px;" width="14" height="14" viewBox="0 0 14 14"><path d="M4.3 10.5 L4.3 6.5 A2.7 2.7 0 0 1 9.7 6.5 L9.7 10.5" stroke="#cfcfcf" stroke-width="1.15" fill="none" transform="rotate(-45 7 7) translate(-0.5 -1)"/><path d="M7 8 L10 11 L13 8 L10 5Z M8.5 6.5 L11.5 9.5 M11.5 6.5 L8.5 9.5" stroke="#3fb6c9" stroke-width="0.6" fill="none"/></svg>
<svg class="a" style="left:330.0px;top:53.5px;" width="14" height="14" viewBox="0 0 14 14"><path d="M4.3 10.5 L4.3 6.5 A2.7 2.7 0 0 1 9.7 6.5 L9.7 10.5" stroke="#cfcfcf" stroke-width="1.15" fill="none" transform="rotate(-45 7 7) translate(-0.5 -1)"/></svg>
<svg class="a" style="left:345px;top:58px;" width="7" height="5" viewBox="0 0 7 5"><path d="M0.5 0.8 L6 0.8 L3.25 4Z" fill="#aaa"/></svg>
<svg class="a" style="left:417.25px;top:54px;" width="3" height="13" viewBox="0 0 3 13"><path d="M1.5 0.5 L1.5 12.5" stroke="#6a6a6a" stroke-width="0.6"/><path d="M1.5 3 L1.5 10" stroke="#9a9a9a" stroke-width="1.2"/></svg>
<svg class="a" style="left:427px;top:58px;" width="7" height="5" viewBox="0 0 7 5"><path d="M0.5 0.8 L6 0.8 L3.25 4Z" fill="#aaa"/></svg>
<svg class="a" style="left:497px;top:55px;" width="4" height="11" viewBox="0 0 4 11"><path d="M1 1 L3 5.5 L1 10" stroke="#777" stroke-width="0.9" fill="none"/></svg>
<svg class="a" style="left:510.5px;top:54px;" width="3" height="13" viewBox="0 0 3 13"><path d="M1.5 0.5 L1.5 12.5" stroke="#6a6a6a" stroke-width="0.6"/><path d="M1.5 3 L1.5 10" stroke="#9a9a9a" stroke-width="1.2"/></svg>
<svg class="a" style="left:517.9px;top:53.5px;" width="14" height="14" viewBox="0 0 14 14"><rect x="2" y="5" width="10.5" height="7" fill="#d0d0d0"/><path d="M2 2.5 L12.5 2.5" stroke="#d0d0d0" stroke-width="1.4" stroke-dasharray="1.2 0.9"/><ellipse cx="7.25" cy="8.5" rx="3" ry="1.8" fill="none" stroke="#555" stroke-width="0.7"/></svg>
<svg class="a" style="left:531.3px;top:53.5px;" width="14" height="14" viewBox="0 0 14 14"><rect x="2" y="5" width="10.5" height="7" fill="#d0d0d0"/><path d="M2 2.5 L12.5 2.5" stroke="#d0d0d0" stroke-width="1.4" stroke-dasharray="1.2 0.9"/></svg>
<svg class="a" style="left:544.5px;top:53.5px;" width="14" height="14" viewBox="0 0 14 14"><rect x="2" y="5" width="10.5" height="7" fill="#d0d0d0"/><path d="M2 2.5 L12.5 2.5" stroke="#d0d0d0" stroke-width="1.4" stroke-dasharray="1.2 0.9"/><text x="7.25" y="10.3" font-size="4" fill="#555" text-anchor="middle" font-family="Liberation Sans" font-weight="bold">IPR</text></svg>
<svg class="a" style="left:557.7px;top:53.5px;" width="14" height="14" viewBox="0 0 14 14"><rect x="2" y="5" width="10.5" height="7" fill="#d0d0d0"/><path d="M2 2.5 L12.5 2.5" stroke="#d0d0d0" stroke-width="1.4" stroke-dasharray="1.2 0.9"/><circle cx="11" cy="11" r="2.6" fill="#3fb6c9"/><circle cx="11" cy="11" r="1" fill="#444"/></svg>
<svg class="a" style="left:571.0px;top:53.5px;" width="14" height="14" viewBox="0 0 14 14"><circle cx="7" cy="7" r="5.3" fill="#3fb6c9"/><circle cx="7" cy="7" r="3" fill="#e8f4f6"/><circle cx="6.2" cy="6.2" r="1.5" fill="#fff"/></svg>
<svg class="a" style="left:583.8px;top:53.5px;" width="14" height="14" viewBox="0 0 14 14"><rect x="2" y="5" width="10.5" height="7" fill="#d0d0d0"/><path d="M2 2.5 L12.5 2.5" stroke="#d0d0d0" stroke-width="1.4" stroke-dasharray="1.2 0.9"/><path d="M8.5 9 L11 7.5 L13.5 9 L13.5 12 L11 13.5 L8.5 12Z" fill="#3fb6c9"/></svg>
<svg class="a" style="left:597.5px;top:53.5px;" width="14" height="14" viewBox="0 0 14 14"><path d="M11 2 L6 7" stroke="#ddd" stroke-width="1.6"/><circle cx="9.5" cy="10" r="2.6" fill="none" stroke="#3fb6c9" stroke-width="1.1"/><circle cx="3" cy="10" r="0.7" fill="#3fb6c9"/><circle cx="5" cy="8" r="0.7" fill="#3fb6c9"/></svg>
<svg class="a" style="left:610.1px;top:53.5px;" width="14" height="14" viewBox="0 0 14 14"><rect x="4" y="3.5" width="2" height="7.5" fill="#d0d0d0"/><rect x="8" y="3.5" width="2" height="7.5" fill="#d0d0d0"/></svg>
<svg class="a" style="left:627px;top:55px;" width="4" height="11" viewBox="0 0 4 11"><path d="M1 1 L3 5.5 L1 10" stroke="#777" stroke-width="0.9" fill="none"/></svg>
<svg class="a" style="left:641.0px;top:54px;" width="3" height="13" viewBox="0 0 3 13"><path d="M1.5 0.5 L1.5 12.5" stroke="#6a6a6a" stroke-width="0.6"/><path d="M1.5 3 L1.5 10" stroke="#9a9a9a" stroke-width="1.2"/></svg>
<svg class="a" style="left:651px;top:55px;" width="10" height="11" viewBox="0 0 10 11"><circle cx="5" cy="3.5" r="2.3" fill="none" stroke="#ddd" stroke-width="0.9"/><path d="M1 10 A4 3.6 0 0 1 9 10" fill="none" stroke="#ddd" stroke-width="0.9"/></svg>
<svg class="a" style="left:709.5px;top:57px;" width="8" height="6" viewBox="0 0 8 6"><path d="M0.5 0.8 L7 0.8 L3.75 4.5Z" fill="#e6e6e6"/></svg>
<svg class="a" style="left:966px;top:41px;" width="9" height="7" viewBox="0 0 9 7"><path d="M1 1.5 L8 1.5 L4.5 5Z" fill="#d8d8d8"/></svg>
<svg class="a" style="left:979.5px;top:38.5px;" width="9" height="12" viewBox="0 0 9 12"><path d="M2.5 5.5 L2.5 3.8 A2 2 0 0 1 6.5 3.8 L6.5 5.5" stroke="#d8d8d8" stroke-width="1.1" fill="none"/><rect x="1.2" y="5.5" width="6.6" height="5.5" fill="#d8d8d8"/><rect x="4" y="7.3" width="1" height="2" fill="#555"/></svg>
<svg class="a" style="left:924.3px;top:53.7px;" width="14" height="14" viewBox="0 0 14 14"><path d="M3 4 L9 2.5 L12 4 L12 11 L6 12.5 L3 11Z" fill="#cfcfcf"/><path d="M3 4 L6 5.5 L6 12.5 M6 5.5 L12 4 M8 5 L8 12 M10 4.5 L10 11.5" stroke="#555" stroke-width="0.5" fill="none"/></svg>
<svg class="a" style="left:937.3px;top:53.7px;" width="14" height="14" viewBox="0 0 14 14"><circle cx="7" cy="2.8" r="1.4" fill="#ddd"/><path d="M2.5 5 L11.5 5 M7 5 L7 9 M7 9 L5.2 13 M7 9 L8.8 13 M5.5 5 L5.5 9 L8.5 9 L8.5 5" stroke="#ddd" stroke-width="0.9" fill="none"/></svg>
<div class="a" style="left:951.00px;top:54.00px;width:13.20px;height:13.40px;background:#4f86ad;"></div>
<svg class="a" style="left:950.6px;top:53.7px;" width="14" height="14" viewBox="0 0 14 14"><path d="M1.5 3 L4 3 M1.5 7 L4 7 M1.5 11.5 L4 11.5" stroke="#ccc" stroke-width="0.8" fill="none"/><rect x="5.5" y="1.8" width="7" height="2.6" fill="#2e4c60" stroke="#ddd" stroke-width="0.7"/><rect x="5.5" y="5.8" width="7" height="2.6" fill="#2e4c60" stroke="#ddd" stroke-width="0.7"/><rect x="5.5" y="10.2" width="7" height="2.6" fill="#2e4c60" stroke="#ddd" stroke-width="0.7"/></svg>
<svg class="a" style="left:963.3px;top:53.7px;" width="14" height="14" viewBox="0 0 14 14"><path d="M12.5 2 L12.5 12.5 M3 3 L12.5 3 M3 7 L10 7 M3 11.5 L10 11.5" stroke="#ddd" stroke-width="0.9" fill="none"/><circle cx="3" cy="3" r="1.3" fill="#ddd"/><circle cx="3" cy="7" r="1.3" fill="#ddd"/><circle cx="3" cy="11.5" r="1.3" fill="#ddd"/></svg>
<svg class="a" style="left:977.3px;top:53.7px;" width="14" height="14" viewBox="0 0 14 14"><path d="M7 1.5 L12.5 4.5 L12.5 10 L7 13 L1.5 10 L1.5 4.5Z" fill="#bdbdbd"/><path d="M1.5 4.5 L7 7.5 L12.5 4.5 M7 7.5 L7 13 M4 3 L4 11.5 M10 3 L10 11.5" stroke="#666" stroke-width="0.5" fill="none"/></svg>
<svg class="a" style="left:36px;top:41px;" width="11" height="10" viewBox="0 0 11 10"><path d="M5.5 0.8 L10.5 5 L9 5 L9 9.5 L6.8 9.5 L6.8 7 L4.2 7 L4.2 9.5 L2 9.5 L2 5 L0.5 5Z" fill="#e0e0e0"/><rect x="7.8" y="1.5" width="1.4" height="2.5" fill="#e0e0e0"/></svg>
<div class="a" style="left:33.90px;top:116.60px;width:20.90px;height:20.40px;background:#5285a6;"></div>
<svg class="a" style="left:36px;top:118px;" width="16" height="18" viewBox="0 0 16 18"><path d="M4 2 L4 15 L7 12 L9.5 17 L11.5 16 L9 11 L13 11Z" fill="#d8d8d8" stroke="#bbb" stroke-width="0.4"/></svg>
<svg class="a" style="left:36px;top:139px;" width="18" height="18" viewBox="0 0 18 18"><ellipse cx="7" cy="8" rx="5.5" ry="4" fill="none" stroke="#3fb6c9" stroke-width="1.3" stroke-dasharray="2.2 1.2" transform="rotate(-30 7 8)"/><path d="M8 5 L8 15 L10 13 L11.5 16.5 L13 16 L11.5 12.5 L14 12.5Z" fill="#d8d8d8"/></svg>
<svg class="a" style="left:36px;top:160px;" width="18" height="18" viewBox="0 0 18 18"><ellipse cx="6.5" cy="11" rx="5" ry="3.8" fill="none" stroke="#3fb6c9" stroke-width="1.3" stroke-dasharray="2.2 1.2" transform="rotate(-30 6.5 11)"/><path d="M16 2 L9 9" stroke="#d8d8d8" stroke-width="1.8"/><path d="M9.5 8.5 L7 12 L6 11 Z" fill="#d8d8d8"/></svg>
<svg class="a" style="left:36px;top:181px;" width="18" height="19" viewBox="0 0 18 19"><rect x="5" y="6" width="8" height="7.5" fill="#d8d8d8"/><path d="M9 1 L11 3.5 L7 3.5Z M9 18.5 L11 16 L7 16Z M0.8 9.75 L3.3 7.75 L3.3 11.75Z M17.2 9.75 L14.7 7.75 L14.7 11.75Z" fill="#3fb6c9"/></svg>
<svg class="a" style="left:36px;top:202.5px;" width="18" height="16" viewBox="0 0 18 16"><path d="M3 12 A7 6 0 1 1 15 11" fill="none" stroke="#3fb6c9" stroke-width="1.3"/><circle cx="15" cy="11" r="1.5" fill="#3fb6c9"/><path d="M9 4 L13 8 L9 12 L5 8Z" fill="#d8d8d8"/></svg>
<svg class="a" style="left:36px;top:224.5px;" width="18" height="17" viewBox="0 0 18 17"><rect x="5" y="2" width="11" height="11" fill="none" stroke="#3fb6c9" stroke-width="1.2" stroke-dasharray="1.6 1"/><rect x="2" y="8" width="7" height="7" fill="#d8d8d8"/></svg>
<div class="a" style="left:34.00px;top:287.80px;width:21.00px;height:1.20px;background:#777;"></div>
<div class="a" style="left:36.50px;top:294.00px;width:16.10px;height:16.50px;background:#bdbdbd;border:1px solid #888"></div>
<svg class="a" style="left:36.5px;top:294px;" width="16" height="16" viewBox="0 0 16 16"><path d="M8 3.5 L10 5.5 L8 7.5 L6 5.5Z M8 8.5 L10 10.5 L8 12.5 L6 10.5Z M3.5 8 L5.5 6 L7.5 8 L5.5 10Z M12.5 8 L10.5 10 L8.5 8 L10.5 6Z" fill="#333"/></svg>
<svg class="a" style="left:36.5px;top:315px;" width="16" height="16.5" viewBox="0 0 16 16.5"><rect x="0.5" y="0.5" width="7" height="7" fill="#444" stroke="#888" stroke-width="0.7"/><rect x="8.5" y="0.5" width="7" height="7" fill="#bbb"/><rect x="0.5" y="8.8" width="7" height="7" fill="#444" stroke="#888" stroke-width="0.7"/><rect x="8.5" y="8.8" width="7" height="7" fill="#444" stroke="#888" stroke-width="0.7"/><path d="M4 2 L4 6 M2 4 L6 4 M4 10.3 L4 14.3 M2 12.3 L6 12.3 M12 10.3 L12 14.3 M10 12.3 L14 12.3" stroke="#aaa" stroke-width="0.6"/><path d="M10 4 L12 2.8 L14 4 L12 5.2Z" fill="#333"/></svg>
<svg class="a" style="left:36.5px;top:336.8px;" width="16" height="16.5" viewBox="0 0 16 16.5"><rect x="0.5" y="0.5" width="7" height="15.5" fill="#444" stroke="#888" stroke-width="0.7"/><rect x="8.5" y="0.5" width="7" height="15.5" fill="#bbb"/><path d="M4 6 L4 10 M2 8 L6 8" stroke="#aaa" stroke-width="0.6"/><path d="M10 8 L12 6.8 L14 8 L12 9.2Z" fill="#333"/></svg>
<div class="a" style="left:34.50px;top:355.70px;width:20.50px;height:19.80px;background:#4b7fa3;"></div>
<svg class="a" style="left:36.5px;top:357.5px;" width="16" height="16" viewBox="0 0 16 16"><rect x="1" y="1" width="14" height="14" fill="#555" stroke="#999" stroke-width="0.7"/><path d="M3 3 L3 13 M3 6 L6 6 M3 9 L6 9 M3 12 L6 12" stroke="#ddd" stroke-width="0.7" fill="none"/><rect x="6.5" y="5" width="6" height="2" fill="#ddd"/><rect x="6.5" y="8" width="6" height="2" fill="#ddd"/><rect x="6.5" y="11" width="6" height="2" fill="#ddd"/><rect x="2" y="2" width="5" height="2" fill="#ddd"/></svg>
<div class="a" style="left:34.00px;top:379.30px;width:21.00px;height:1.20px;background:#777;"></div>
<svg class="a" style="left:36px;top:385px;" width="16" height="16" viewBox="0 0 16 16"><circle cx="6.5" cy="6.5" r="4.3" fill="none" stroke="#ddd" stroke-width="1.3"/><path d="M9.5 9.5 L14 14" stroke="#ddd" stroke-width="1.6"/></svg>
<svg class="a" style="left:36px;top:522px;" width="18" height="20" viewBox="0 0 18 20"><path d="M2 2 L14 2 L16 4 L16 13 L4 13 L2 11Z" fill="#37a5cc"/><path d="M2 2 L4 4 L4 13 L2 11Z" fill="#5fc3e4"/><rect x="4" y="13" width="12" height="6" fill="#2a86a8"/><text x="10" y="11.2" font-size="9.5" font-weight="bold" fill="#fff" text-anchor="middle" font-family="Liberation Sans">M</text><rect x="7" y="15" width="6" height="2" fill="#9fd4e6" opacity="0.7"/></svg>
<svg class="a" style="left:39.5px;top:593.5px;" width="10" height="10" viewBox="0 0 10 10"><circle cx="5" cy="5" r="4.6" fill="#8a8a8a"/><text x="5" y="7.8" font-size="7.5" font-weight="bold" fill="#3a3a3a" text-anchor="middle" font-family="Liberation Sans">?</text></svg>
<svg class="a" style="left:80.8px;top:149.2px;" width="10" height="8" viewBox="0 0 10 8"><rect x="0.5" y="1.8" width="6" height="4" fill="#d8d8d8"/><path d="M7 3.8 L9 2 L9 5.6Z" fill="#d8d8d8"/></svg>
<svg class="a" style="left:80.8px;top:160.57999999999998px;" width="10" height="8" viewBox="0 0 10 8"><rect x="0.5" y="1.8" width="6" height="4" fill="#d8d8d8"/><path d="M7 3.8 L9 2 L9 5.6Z" fill="#d8d8d8"/></svg>
<svg class="a" style="left:80.8px;top:171.95999999999998px;" width="10" height="8" viewBox="0 0 10 8"><rect x="0.5" y="1.8" width="6" height="4" fill="#d8d8d8"/><path d="M7 3.8 L9 2 L9 5.6Z" fill="#d8d8d8"/></svg>
<svg class="a" style="left:80.8px;top:183.33999999999997px;" width="10" height="8" viewBox="0 0 10 8"><rect x="0.5" y="1.8" width="6" height="4" fill="#d8d8d8"/><path d="M7 3.8 L9 2 L9 5.6Z" fill="#d8d8d8"/></svg>
<svg class="a" style="left:80.8px;top:194.72px;" width="10" height="8" viewBox="0 0 10 8"><rect x="0.5" y="1.8" width="6" height="4" fill="#d8d8d8"/><path d="M7 3.8 L9 2 L9 5.6Z" fill="#d8d8d8"/></svg>
<svg class="a" style="left:81px;top:205.1px;" width="10" height="10" viewBox="0 0 10 10"><path d="M5 0.5 L7 2.5 L5 4.5 L3 2.5Z M5 5 L7 7 L5 9 L3 7Z M0.5 4.7 L2.5 2.7 L4.5 4.7 L2.5 6.7Z M9.5 4.7 L7.5 6.7 L5.5 4.7 L7.5 2.7Z" fill="#e0e0e0"/><rect x="3.8" y="3.5" width="2.4" height="2.4" fill="#444"/></svg>
<svg class="a" style="left:81px;top:216.48px;" width="10" height="10" viewBox="0 0 10 10"><path d="M5 0.5 L7 2.5 L5 4.5 L3 2.5Z M5 5 L7 7 L5 9 L3 7Z M0.5 4.7 L2.5 2.7 L4.5 4.7 L2.5 6.7Z M9.5 4.7 L7.5 6.7 L5.5 4.7 L7.5 2.7Z" fill="#e0e0e0"/><rect x="3.8" y="3.5" width="2.4" height="2.4" fill="#444"/></svg>
<svg class="a" style="left:81px;top:227.86px;" width="10" height="10" viewBox="0 0 10 10"><path d="M5 0.5 L7 2.5 L5 4.5 L3 2.5Z M5 5 L7 7 L5 9 L3 7Z M0.5 4.7 L2.5 2.7 L4.5 4.7 L2.5 6.7Z M9.5 4.7 L7.5 6.7 L5.5 4.7 L7.5 2.7Z" fill="#e0e0e0"/><rect x="3.8" y="3.5" width="2.4" height="2.4" fill="#444"/></svg>
<svg class="a" style="left:81px;top:239.24px;" width="10" height="10" viewBox="0 0 10 10"><path d="M5 0.5 L7 2.5 L5 4.5 L3 2.5Z M5 5 L7 7 L5 9 L3 7Z M0.5 4.7 L2.5 2.7 L4.5 4.7 L2.5 6.7Z M9.5 4.7 L7.5 6.7 L5.5 4.7 L7.5 2.7Z" fill="#e0e0e0"/><rect x="3.8" y="3.5" width="2.4" height="2.4" fill="#444"/></svg>
<svg class="a" style="left:81px;top:250.62px;" width="10" height="10" viewBox="0 0 10 10"><path d="M5 0.5 L7 2.5 L5 4.5 L3 2.5Z M5 5 L7 7 L5 9 L3 7Z M0.5 4.7 L2.5 2.7 L4.5 4.7 L2.5 6.7Z M9.5 4.7 L7.5 6.7 L5.5 4.7 L7.5 2.7Z" fill="#e0e0e0"/><rect x="3.8" y="3.5" width="2.4" height="2.4" fill="#444"/></svg>
<svg class="a" style="left:81px;top:261.8px;" width="10" height="10" viewBox="0 0 10 10"><rect x="2.5" y="2.5" width="5" height="5" fill="#d2be2e"/><rect x="8.80" y="4.60" width="0.8" height="0.8" fill="#ddd"/><rect x="7.57" y="7.57" width="0.8" height="0.8" fill="#ddd"/><rect x="4.60" y="8.80" width="0.8" height="0.8" fill="#ddd"/><rect x="1.63" y="7.57" width="0.8" height="0.8" fill="#ddd"/><rect x="0.40" y="4.60" width="0.8" height="0.8" fill="#ddd"/><rect x="1.63" y="1.63" width="0.8" height="0.8" fill="#ddd"/><rect x="4.60" y="0.40" width="0.8" height="0.8" fill="#ddd"/><rect x="7.57" y="1.63" width="0.8" height="0.8" fill="#ddd"/></svg>
<svg class="a" style="left:81px;top:273.18px;" width="10" height="10" viewBox="0 0 10 10"><rect x="2.5" y="2.5" width="5" height="5" fill="#d2be2e"/><rect x="8.80" y="4.60" width="0.8" height="0.8" fill="#ddd"/><rect x="7.57" y="7.57" width="0.8" height="0.8" fill="#ddd"/><rect x="4.60" y="8.80" width="0.8" height="0.8" fill="#ddd"/><rect x="1.63" y="7.57" width="0.8" height="0.8" fill="#ddd"/><rect x="0.40" y="4.60" width="0.8" height="0.8" fill="#ddd"/><rect x="1.63" y="1.63" width="0.8" height="0.8" fill="#ddd"/><rect x="4.60" y="0.40" width="0.8" height="0.8" fill="#ddd"/><rect x="7.57" y="1.63" width="0.8" height="0.8" fill="#ddd"/></svg>
<svg class="a" style="left:81px;top:284.56px;" width="10" height="10" viewBox="0 0 10 10"><circle cx="5" cy="5" r="4" fill="none" stroke="#ddd" stroke-width="0.9"/><circle cx="4" cy="5.5" r="2" fill="#3fb6c9"/><rect x="4" y="3" width="3" height="3" fill="#ddd"/></svg>
<svg class="a" style="left:81px;top:295.94px;" width="10" height="10" viewBox="0 0 10 10"><circle cx="5" cy="5" r="4" fill="none" stroke="#ddd" stroke-width="0.9"/><circle cx="4" cy="5.5" r="2" fill="#3fb6c9"/><rect x="4" y="3" width="3" height="3" fill="#ddd"/></svg>
<svg class="a" style="left:72px;top:284.6px;" width="9" height="9" viewBox="0 0 9 9"><rect x="0.8" y="0.8" width="6.5" height="6.5" fill="none" stroke="#999" stroke-width="0.7"/><path d="M4 2.3 L4 5.8 M2.3 4 L5.8 4" stroke="#bbb" stroke-width="0.7"/></svg>
<svg class="a" style="left:62px;top:136px;" width="11" height="10" viewBox="0 0 11 10"><path d="M3 1 L1 1 L1 3 M8 1 L10 1 L10 3 M1 7 L1 9 L3 9 M10 7 L10 9 L8 9" stroke="#888" stroke-width="0.7" fill="none"/><path d="M4 4 L2 5 L4 6 M7 4 L9 5 L7 6" stroke="#666" stroke-width="0.6" fill="none"/></svg>
<svg class="a" style="left:197px;top:138px;" width="8" height="6" viewBox="0 0 8 6"><path d="M0.5 1 L7 1 L3.75 4.5Z" fill="#d8d8d8"/></svg>
<svg class="a" style="left:200.8px;top:147px;" width="6.5" height="6" viewBox="0 0 6.5 6"><path d="M0.5 5 L3.25 1.5 L6 5Z" fill="#cfcfcf"/></svg>
<svg class="a" style="left:62px;top:532px;" width="6" height="7" viewBox="0 0 6 7"><path d="M5 0.8 L1 3.5 L5 6.2Z" fill="#bbb"/></svg>
<svg class="a" style="left:194.5px;top:532px;" width="6" height="7" viewBox="0 0 6 7"><path d="M1 0.8 L5 3.5 L1 6.2Z" fill="#bbb"/></svg>
<svg class="a" style="left:201px;top:525.5px;" width="7" height="5" viewBox="0 0 7 5"><path d="M0.8 0.8 L6 0.8 L3.4 4Z" fill="#cfcfcf"/></svg>
<svg class="a" style="left:213.5px;top:123px;" width="3" height="10" viewBox="0 0 3 10"><path d="M1.5 1 L1.5 9" stroke="#8a8a8a" stroke-width="1.1"/></svg>
<svg class="a" style="left:218.0px;top:122.2px;" width="12" height="12" viewBox="0 0 12 12"><rect x="1" y="4" width="7" height="4.5" fill="#d8d8d8"/><path d="M8.5 6.25 L11 4.3 L11 8.2Z" fill="#d8d8d8"/></svg>
<div class="a" style="left:229.80px;top:122.80px;width:10.20px;height:10.60px;background:#4f86ad;"></div>
<svg class="a" style="left:229.0px;top:122.2px;" width="12" height="12" viewBox="0 0 12 12"><rect x="1" y="2.5" width="7" height="4" fill="#bbb"/><path d="M8.5 4.5 L11 2.8 L11 6.2Z" fill="#bbb"/><path d="M3 7 A2.5 2.5 0 1 0 8 7" stroke="#3fb6c9" stroke-width="1.2" fill="none"/><rect x="4" y="5" width="3" height="2.5" fill="#3fb6c9"/></svg>
<svg class="a" style="left:240.0px;top:122.2px;" width="12" height="12" viewBox="0 0 12 12"><rect x="1" y="2.5" width="7" height="4" fill="#bbb"/><path d="M8.5 4.5 L11 2.8 L11 6.2Z" fill="#bbb"/><path d="M5 5 L8 8 L5 11 L2 8Z" stroke="#3fb6c9" stroke-width="1.1" fill="none"/></svg>
<svg class="a" style="left:250.6px;top:122.2px;" width="12" height="12" viewBox="0 0 12 12"><path d="M4 2 L8 2 L8 10 L6 8.5 L4 10Z" fill="#d0d0d0"/></svg>
<svg class="a" style="left:261.5px;top:122.2px;" width="12" height="12" viewBox="0 0 12 12"><path d="M9 2 L4 8 L6 9.5 L10 4Z" fill="#3fb6c9"/><path d="M3 10 L5 8.5 M7 10.5 L10 9" stroke="#aaa" stroke-width="0.6"/></svg>
<svg class="a" style="left:272.5px;top:122.2px;" width="12" height="12" viewBox="0 0 12 12"><circle cx="7.5" cy="6.5" r="2.8" fill="none" stroke="#3fb6c9" stroke-width="1"/><path d="M1 6 L4.5 6 M5 3 L6 1.5" stroke="#ccc" stroke-width="0.8"/></svg>
<div class="a" style="left:284.00px;top:122.60px;width:11.00px;height:11.00px;background:transparent;border:1px solid #3caa3c"></div>
<svg class="a" style="left:283.5px;top:122.2px;" width="12" height="12" viewBox="0 0 12 12"><path d="M9 2 L3 8.5 L2.5 10 L4 9.5 L10 3Z" fill="#3fb6c9"/></svg>
<svg class="a" style="left:296.1px;top:123px;" width="3" height="10" viewBox="0 0 3 10"><path d="M1.5 1 L1.5 9" stroke="#8a8a8a" stroke-width="1.1"/></svg>
<svg class="a" style="left:300.0px;top:122.2px;" width="12" height="12" viewBox="0 0 12 12"><rect x="1.5" y="2" width="9" height="8" fill="none" stroke="#c8c8c8" stroke-width="0.8"/><path d="M1.5 4.7 L10.5 4.7 M1.5 7.3 L10.5 7.3 M4.5 2 L4.5 10 M7.5 2 L7.5 10" stroke="#c8c8c8" stroke-width="0.6"/></svg>
<svg class="a" style="left:311.4px;top:122.2px;" width="12" height="12" viewBox="0 0 12 12"><rect x="1" y="2.5" width="10" height="7" fill="none" stroke="#c8c8c8" stroke-width="0.9"/><rect x="2.5" y="4.5" width="7" height="3" fill="#555" stroke="#aaa" stroke-width="0.5"/></svg>
<div class="a" style="left:323.00px;top:122.80px;width:10.20px;height:10.60px;background:#4f86ad;"></div>
<svg class="a" style="left:322.1px;top:122.2px;" width="12" height="12" viewBox="0 0 12 12"><rect x="1.5" y="2" width="9" height="8" fill="#3a3a3a" stroke="#999" stroke-width="0.7"/><circle cx="6" cy="6" r="2" fill="#3fb6c9"/></svg>
<div class="a" style="left:334.00px;top:122.80px;width:10.00px;height:10.60px;background:#4f86ad;"></div>
<svg class="a" style="left:333.0px;top:122.2px;" width="12" height="12" viewBox="0 0 12 12"><rect x="1.5" y="2" width="9" height="8" fill="#3a3a3a" stroke="#999" stroke-width="0.7"/><circle cx="6" cy="6" r="2.2" fill="none" stroke="#3fb6c9" stroke-width="1"/></svg>
<svg class="a" style="left:344.0px;top:122.2px;" width="12" height="12" viewBox="0 0 12 12"><rect x="1.5" y="2" width="9" height="8" fill="none" stroke="#aaa" stroke-width="0.7"/><path d="M3 3.5 L9 8.5 M9 3.5 L3 8.5" stroke="#3fb6c9" stroke-width="1"/></svg>
<svg class="a" style="left:354.9px;top:122.2px;" width="12" height="12" viewBox="0 0 12 12"><rect x="1.5" y="2" width="9" height="8" fill="none" stroke="#aaa" stroke-width="0.7"/><path d="M3.5 8 L8.5 4" stroke="#3fb6c9" stroke-width="1.6"/></svg>
<svg class="a" style="left:365.5px;top:122.2px;" width="12" height="12" viewBox="0 0 12 12"><rect x="1.5" y="2" width="9" height="8" fill="none" stroke="#aaa" stroke-width="0.7"/><path d="M4 3 L8 3 M4 9 L8 9 M6 3 L6 9" stroke="#3fb6c9" stroke-width="1.1"/></svg>
<svg class="a" style="left:379.1px;top:123px;" width="3" height="10" viewBox="0 0 3 10"><path d="M1.5 1 L1.5 9" stroke="#8a8a8a" stroke-width="1.1"/></svg>
<svg class="a" style="left:383.0px;top:122.2px;" width="12" height="12" viewBox="0 0 12 12"><path d="M6 1.5 L10.5 4 L10.5 8.5 L6 11 L1.5 8.5 L1.5 4Z M1.5 4 L6 6.5 L10.5 4 M6 6.5 L6 11" stroke="#c8c8c8" stroke-width="0.7" fill="none"/></svg>
<div class="a" style="left:394.00px;top:122.80px;width:11.00px;height:10.60px;background:#4f86ad;"></div>
<svg class="a" style="left:393.5px;top:122.2px;" width="12" height="12" viewBox="0 0 12 12"><path d="M6 1.5 L10.5 4 L10.5 8.5 L6 11 L1.5 8.5 L1.5 4Z" fill="#3fb6c9"/><path d="M1.5 4 L6 6.5 L10.5 4 M6 6.5 L6 11" stroke="#2a7080" stroke-width="0.6" fill="none"/></svg>
<svg class="a" style="left:404.0px;top:122.2px;" width="12" height="12" viewBox="0 0 12 12"><circle cx="6" cy="6" r="4.5" fill="#ddd"/><path d="M6 1.5 A4.5 4.5 0 0 1 6 10.5Z" fill="#555"/></svg>
<div class="a" style="left:415.70px;top:122.80px;width:10.70px;height:10.60px;background:#4f86ad;"></div>
<svg class="a" style="left:415.0px;top:122.2px;" width="12" height="12" viewBox="0 0 12 12"><circle cx="6" cy="6" r="4.3" fill="none" stroke="#bbb" stroke-width="0.7"/><circle cx="6" cy="4.5" r="1" fill="#3fb6c9"/><circle cx="4.2" cy="7.5" r="1" fill="#3fb6c9"/><circle cx="7.8" cy="7.5" r="1" fill="#3fb6c9"/></svg>
<svg class="a" style="left:426.0px;top:122.2px;" width="12" height="12" viewBox="0 0 12 12"><circle cx="6" cy="6" r="4.5" fill="#999"/><path d="M2 4 L10 4 M1.5 6 L10.5 6 M2 8 L10 8 M4 2 L4 10 M6 1.5 L6 10.5 M8 2 L8 10" stroke="#666" stroke-width="0.6"/></svg>
<div class="a" style="left:438.00px;top:122.80px;width:10.20px;height:10.60px;background:#4f86ad;"></div>
<svg class="a" style="left:437.1px;top:122.2px;" width="12" height="12" viewBox="0 0 12 12"><path d="M4 2 A3 3 0 0 1 8 2 L8 7 L4 7Z" fill="#e0e0e0"/><rect x="4.5" y="7.5" width="3" height="2" fill="#bbb"/></svg>
<div class="a" style="left:448.70px;top:122.80px;width:10.20px;height:10.60px;background:#4f86ad;"></div>
<svg class="a" style="left:447.8px;top:122.2px;" width="12" height="12" viewBox="0 0 12 12"><circle cx="6.5" cy="5.5" r="3.8" fill="#3fb6c9"/><ellipse cx="4" cy="9" rx="3" ry="1.3" fill="#aaa"/></svg>
<svg class="a" style="left:459.9px;top:123px;" width="3" height="10" viewBox="0 0 3 10"><path d="M1.5 1 L1.5 9" stroke="#8a8a8a" stroke-width="1.1"/></svg>
<svg class="a" style="left:465.0px;top:122.2px;" width="12" height="12" viewBox="0 0 12 12"><circle cx="6" cy="5.5" r="3.3" fill="#d8d8d8"/><path d="M2 10 L10 10" stroke="#3fb6c9" stroke-width="0.9"/></svg>
<svg class="a" style="left:475.6px;top:122.2px;" width="12" height="12" viewBox="0 0 12 12"><circle cx="7" cy="4.8" r="2.8" fill="#bbb"/><path d="M3 9 L6 6" stroke="#888" stroke-width="1.8"/></svg>
<svg class="a" style="left:486.6px;top:122.2px;" width="12" height="12" viewBox="0 0 12 12"><path d="M6 1.5 L10.5 6 L6 10.5 L1.5 6Z" fill="none" stroke="#3fb6c9" stroke-width="1.1"/><path d="M6 1.5 L10.5 6 L6 10.5" fill="none" stroke="#bbb" stroke-width="1.1"/></svg>
<svg class="a" style="left:497.2px;top:122.2px;" width="12" height="12" viewBox="0 0 12 12"><rect x="1.5" y="1.5" width="4" height="4" fill="none" stroke="#3fb6c9" stroke-width="0.6"/><rect x="4" y="4" width="6.5" height="6.5" fill="#3fb6c9"/></svg>
<svg class="a" style="left:510.5px;top:123px;" width="3" height="10" viewBox="0 0 3 10"><path d="M1.5 1 L1.5 9" stroke="#8a8a8a" stroke-width="1.1"/></svg>
<svg class="a" style="left:514.6px;top:122.2px;" width="12" height="12" viewBox="0 0 12 12"><rect x="1" y="1.5" width="7" height="7" fill="none" stroke="#3fb6c9" stroke-width="0.8" stroke-dasharray="1.4 0.8"/><path d="M6 5 L6 11 L7.5 9.8 L8.8 12 L9.8 11.5 L8.6 9.5 L10.5 9.5Z" fill="#ccc"/></svg>
<svg class="a" style="left:527.1px;top:123px;" width="3" height="10" viewBox="0 0 3 10"><path d="M1.5 1 L1.5 9" stroke="#8a8a8a" stroke-width="1.1"/></svg>
<svg class="a" style="left:531.5px;top:122.2px;" width="12" height="12" viewBox="0 0 12 12"><rect x="4" y="1.5" width="6.5" height="6.5" fill="none" stroke="#ccc" stroke-width="0.8"/><rect x="1.5" y="4" width="6.5" height="6.5" fill="#ccc"/></svg>
<svg class="a" style="left:542.3px;top:122.2px;" width="12" height="12" viewBox="0 0 12 12"><rect x="4" y="1.5" width="6.5" height="6.5" fill="#aaa"/><rect x="1.5" y="4" width="6.5" height="6.5" fill="#ccc" stroke="#444" stroke-width="0.5"/></svg>
<svg class="a" style="left:553.0px;top:122.2px;" width="12" height="12" viewBox="0 0 12 12"><rect x="1.5" y="1.5" width="9" height="9" fill="none" stroke="#ccc" stroke-width="0.8"/><path d="M3.5 3.5 L8.5 8.5" stroke="#ccc" stroke-width="0.9"/></svg>
<svg class="a" style="left:566.5px;top:123px;" width="3" height="10" viewBox="0 0 3 10"><path d="M1.5 1 L1.5 9" stroke="#8a8a8a" stroke-width="1.1"/></svg>
<svg class="a" style="left:571.2px;top:122.2px;" width="12" height="12" viewBox="0 0 12 12"><circle cx="6" cy="6" r="4" fill="none" stroke="#ddd" stroke-width="1.6" stroke-dasharray="2 1"/></svg>
<div class="a" style="left:583.20px;top:123.00px;width:22.00px;height:10.50px;background:#2b2b2b;"></div>
<div class="t" style="left:585.00px;top:124.93px;font-size:7px;color:#d0d0d0;">0.00</div>
<svg class="a" style="left:605.8px;top:122.2px;" width="12" height="12" viewBox="0 0 12 12"><path d="M6 2 A4 4 0 0 0 6 10Z" fill="#ddd"/><path d="M6 2 A4 4 0 0 1 6 10" stroke="#ddd" stroke-width="0.8" fill="none"/></svg>
<div class="a" style="left:618.00px;top:123.00px;width:21.80px;height:10.50px;background:#2b2b2b;"></div>
<div class="t" style="left:622.00px;top:124.93px;font-size:7px;color:#d0d0d0;">1.00</div>
<div class="a" style="left:641.60px;top:122.80px;width:10.90px;height:10.60px;background:#4f86ad;"></div>
<svg class="a" style="left:641.0px;top:122.2px;" width="12" height="12" viewBox="0 0 12 12"><circle cx="6" cy="6" r="4.2" fill="#3fb6c9" stroke="#1f5f70" stroke-width="0.6"/><path d="M4 6 L5 5 L6 6 L7 5 L8 6" stroke="#1f5f70" stroke-width="0.6" fill="none"/></svg>
<div class="a" style="left:654.00px;top:122.60px;width:61.50px;height:11.00px;background:#4c4c4c;"></div>
<div class="t" style="left:655.50px;top:124.97px;font-size:6.9px;color:#e8e8e8;width:59.5px;overflow:hidden">ACES 1.0 SDR-video</div>
<div class="t b" style="left:220.70px;top:134.71px;font-size:6px;color:#f2f2f2;">Verts:</div>
<div class="t b" style="left:332.52px;top:134.71px;font-size:6px;color:#f2f2f2;">50393</div>
<div class="t b" style="left:410.65px;top:134.71px;font-size:6px;color:#f2f2f2;">6242</div>
<div class="t b" style="left:496.93px;top:134.71px;font-size:6px;color:#f2f2f2;">0</div>
<div class="t b" style="left:220.70px;top:146.06px;font-size:6px;color:#f2f2f2;">Edges:</div>
<div class="t b" style="left:329.18px;top:146.06px;font-size:6px;color:#f2f2f2;">100688</div>
<div class="t b" style="left:407.32px;top:146.06px;font-size:6px;color:#f2f2f2;">12480</div>
<div class="t b" style="left:496.93px;top:146.06px;font-size:6px;color:#f2f2f2;">0</div>
<div class="t b" style="left:220.70px;top:157.41px;font-size:6px;color:#f2f2f2;">Faces:</div>
<div class="t b" style="left:332.52px;top:157.41px;font-size:6px;color:#f2f2f2;">50304</div>
<div class="t b" style="left:410.65px;top:157.41px;font-size:6px;color:#f2f2f2;">6240</div>
<div class="t b" style="left:496.93px;top:157.41px;font-size:6px;color:#f2f2f2;">0</div>
<div class="t b" style="left:220.70px;top:168.76px;font-size:6px;color:#f2f2f2;">Tris:</div>
<div class="t b" style="left:329.18px;top:168.76px;font-size:6px;color:#f2f2f2;">100608</div>
<div class="t b" style="left:407.32px;top:168.76px;font-size:6px;color:#f2f2f2;">12480</div>
<div class="t b" style="left:496.93px;top:168.76px;font-size:6px;color:#f2f2f2;">0</div>
<div class="t b" style="left:220.70px;top:180.11px;font-size:6px;color:#f2f2f2;">UVs:</div>
<div class="t b" style="left:332.52px;top:180.11px;font-size:6px;color:#f2f2f2;">51304</div>
<div class="t b" style="left:410.65px;top:180.11px;font-size:6px;color:#f2f2f2;">6473</div>
<div class="t b" style="left:496.93px;top:180.11px;font-size:6px;color:#f2f2f2;">0</div>
<div class="t b" style="left:447.40px;top:139.41px;font-size:6px;color:#1f6a24;transform:scaleX(0.9891);transform-origin:0 0;">1920 x 1080</div>
<svg class="a" style="left:662px;top:151px;" width="42" height="36" viewBox="0 0 42 36"><path d="M3 3.5 L15.5 2 L15.5 32.5 L4 28Z" fill="#c4c4c4" stroke="#888" stroke-width="0.4"/><path d="M15.5 2 L38 3.5 L37 29 L15.5 32.5Z" fill="#cfcfcf" stroke="#888" stroke-width="0.4"/><text x="26.5" y="19" font-size="5" font-weight="bold" fill="#777" text-anchor="middle" font-family="Liberation Sans">RIGHT</text><text x="9.5" y="18" font-size="3.5" font-weight="bold" fill="#999" text-anchor="middle" font-family="Liberation Sans" transform="scale(1 1)">FRONT</text></svg>
<div class="t b" style="left:453.01px;top:531.35px;font-size:5.5px;color:#f0f0f0;">persp</div>
<svg class="a" style="left:216px;top:512px;" width="22" height="20" viewBox="0 0 22 20"><path d="M9 15 L9 5" stroke="#30c030" stroke-width="0.9"/><path d="M7.5 6 L9 3 L10.5 6Z" fill="#30c030"/><path d="M9 15 L17 15" stroke="#d03030" stroke-width="0.9"/><path d="M9 15 L3 17" stroke="#3030d0" stroke-width="0.9"/><path d="M16 13.5 L18 16.5 M18 13.5 L16 16.5" stroke="#d03030" stroke-width="0.6"/></svg>
<svg class="a" style="left:883.2px;top:551px;" width="10.4" height="10" viewBox="0 0 10.4 10"><rect x="0" y="1" width="1.3" height="8" fill="#c8c8c8"/><path d="M5.5 1.5 L1.8 5 L5.5 8.5Z M9.4 1.5 L5.7 5 L9.4 8.5Z" fill="#c8c8c8"/></svg>
<svg class="a" style="left:897.8px;top:551px;" width="8.7" height="10" viewBox="0 0 8.7 10"><rect x="0" y="1" width="1.3" height="8" fill="#c8c8c8"/><path d="M7.7 1.5 L2 5 L7.7 8.5Z" fill="#c8c8c8"/></svg>
<svg class="a" style="left:910.6px;top:551px;" width="8.7" height="10" viewBox="0 0 8.7 10"><rect x="0" y="0" width="1.8" height="10" fill="#e8762c"/><path d="M7.7 1.5 L2.5 5 L7.7 8.5Z" fill="#c8c8c8"/></svg>
<svg class="a" style="left:924.3px;top:551px;" width="8.7" height="10" viewBox="0 0 8.7 10"><path d="M7.7 0.5 L0.5 5 L7.7 9.5Z" fill="#c8c8c8"/></svg>
<svg class="a" style="left:937px;top:551px;" width="7.9" height="10" viewBox="0 0 7.9 10"><path d="M0 0.5 L6.9 5 L0 9.5Z" fill="#c8c8c8"/></svg>
<svg class="a" style="left:949.9px;top:551px;" width="8.7" height="10" viewBox="0 0 8.7 10"><path d="M0 1.5 L5.2 5 L0 8.5Z" fill="#c8c8c8"/><rect x="5.9" y="0" width="1.8" height="10" fill="#e8762c"/></svg>
<svg class="a" style="left:962.7px;top:551px;" width="8.7" height="10" viewBox="0 0 8.7 10"><path d="M0 1.5 L5.7 5 L0 8.5Z" fill="#c8c8c8"/><rect x="6.4" y="1" width="1.3" height="8" fill="#c8c8c8"/></svg>
<svg class="a" style="left:974.7px;top:551px;" width="11.3" height="10" viewBox="0 0 11.3 10"><path d="M0 1.5 L3.7 5 L0 8.5Z M3.9 1.5 L7.6 5 L3.9 8.5Z" fill="#c8c8c8"/><rect x="8.6" y="1" width="1.3" height="8" fill="#c8c8c8"/></svg>
<svg class="a" style="left:645.3px;top:572px;" width="3" height="13" viewBox="0 0 3 13"><path d="M1.5 0.5 L1.5 12.5" stroke="#6a6a6a" stroke-width="0.6"/><path d="M1.5 3.25 L1.5 9.75" stroke="#999" stroke-width="1.2"/></svg>
<svg class="a" style="left:655px;top:572px;" width="9" height="12" viewBox="0 0 9 12"><path d="M1 1 L6 1 L6 10 L3.5 8 L1 10Z" fill="#e8762c"/><path d="M5 1.5 A2 2 0 0 1 8.5 2.5 L8.5 4 L5 4Z" fill="#ddd"/></svg>
<svg class="a" style="left:669.75px;top:572px;" width="3" height="13" viewBox="0 0 3 13"><path d="M1.5 0.5 L1.5 12.5" stroke="#6a6a6a" stroke-width="0.6"/><path d="M1.5 3.25 L1.5 9.75" stroke="#999" stroke-width="1.2"/></svg>
<svg class="a" style="left:679.5px;top:576px;" width="7" height="5" viewBox="0 0 7 5"><path d="M0.5 0.8 L6.5 0.8 L3.5 4Z" fill="#888"/></svg>
<div class="a" style="left:690.40px;top:572.40px;width:56.60px;height:12.60px;background:#3e3e3e;border:1px solid #393939;border-radius:2px"></div>
<div class="t" style="left:693.00px;top:575.13px;font-size:7px;color:#d0d0d0;transform:scaleX(0.9524);transform-origin:0 0;">No Character Set</div>
<svg class="a" style="left:753px;top:576px;" width="7" height="5" viewBox="0 0 7 5"><path d="M0.5 0.8 L6.5 0.8 L3.5 4Z" fill="#888"/></svg>
<div class="a" style="left:764.00px;top:572.40px;width:57.25px;height:12.60px;background:#3e3e3e;border:1px solid #393939;border-radius:2px"></div>
<div class="t" style="left:767.00px;top:575.13px;font-size:7px;color:#d0d0d0;transform:scaleX(0.9693);transform-origin:0 0;">No Anim Layer</div>
<svg class="a" style="left:826.1px;top:572px;" width="3" height="13" viewBox="0 0 3 13"><path d="M1.5 0.5 L1.5 12.5" stroke="#6a6a6a" stroke-width="0.6"/><path d="M1.5 3.25 L1.5 9.75" stroke="#999" stroke-width="1.2"/></svg>
<div class="a" style="left:835.40px;top:572.30px;width:57.70px;height:10.30px;background:#555;"></div>
<div class="a" style="left:881.50px;top:572.30px;width:11.60px;height:10.30px;background:#5a5a5a;"></div>
<div class="t" style="left:837.50px;top:574.13px;font-size:7px;color:#c8c8c8;">24 fps</div>
<svg class="a" style="left:884px;top:575px;" width="9" height="6" viewBox="0 0 9 6"><path d="M0.5 0.8 L7.5 0.8 L4 4.5Z" fill="#d0d0d0"/></svg>
<svg class="a" style="left:899.5px;top:572px;" width="12" height="11" viewBox="0 0 12 11"><path d="M3 3.5 L9 3.5 A2.5 2.5 0 0 1 9 8.5 L3 8.5 A2.5 2.5 0 0 1 3 3.5Z" fill="none" stroke="#ddd" stroke-width="1.1"/></svg>
<div class="a" style="left:916.00px;top:571.50px;width:13.00px;height:13.20px;background:#4f86ad;"></div>
<svg class="a" style="left:916px;top:571.5px;" width="13" height="13" viewBox="0 0 13 13"><rect x="2" y="4" width="8" height="6.5" fill="#e8762c"/><rect x="3" y="6" width="6" height="2.5" fill="#555"/><path d="M8 1 L12 4 L8 7Z" fill="#ddd"/></svg>
<svg class="a" style="left:933.4px;top:572px;" width="3" height="13" viewBox="0 0 3 13"><path d="M1.5 0.5 L1.5 12.5" stroke="#6a6a6a" stroke-width="0.6"/><path d="M1.5 3.25 L1.5 9.75" stroke="#999" stroke-width="1.2"/></svg>
<svg class="a" style="left:941.5px;top:572px;" width="13" height="12" viewBox="0 0 13 12"><path d="M1.5 4.5 L4 4.5 L7 2 L7 10 L4 7.5 L1.5 7.5Z" fill="#c8c8c8"/><path d="M9 3.5 A3 3 0 0 1 9 8.5" stroke="#aaa" stroke-width="0.8" fill="none"/></svg>
<svg class="a" style="left:958px;top:572px;" width="13" height="12" viewBox="0 0 13 12"><path d="M3 4 A4.3 4.3 0 0 1 10.5 4.5 M10 8.5 A4.3 4.3 0 0 1 2.5 7.5" stroke="#bbb" stroke-width="0.9" fill="none"/><rect x="5.6" y="3" width="1.8" height="5.5" fill="#e8762c"/></svg>
<svg class="a" style="left:973.5px;top:571px;" width="13" height="14" viewBox="0 0 13 14"><circle cx="3" cy="2.5" r="1.8" fill="none" stroke="#ddd" stroke-width="0.7"/><circle cx="9" cy="3.5" r="1.3" fill="#e8762c"/><path d="M8.5 5 L6 9 L8 10.5 L7 13 M6 9 L3.5 11 M8 6.5 L11 8 M7.5 6 L4.5 6.5" stroke="#e8762c" stroke-width="1.3" fill="none"/></svg>
<svg class="a" style="left:976px;top:593px;" width="11" height="11" viewBox="0 0 11 11"><rect x="0.5" y="0.5" width="10" height="2" fill="#bbb"/><rect x="0.5" y="3.5" width="10" height="7" fill="#d0d0d0"/><path d="M3 5 L2 7 L3 9 M8 5 L9 7 L8 9 M5.5 5 L5.5 9" stroke="#444" stroke-width="0.8" fill="none"/></svg>
<svg class="a" style="left:427px;top:595px;" width="8" height="8" viewBox="0 0 8 8"><path d="M7 1 L1 7 M7 3.5 L3.5 7 M7 6 L6 7" stroke="#666" stroke-width="0.6"/></svg>
<svg class="a" style="left:441.5px;top:590.5px;" width="3" height="16" viewBox="0 0 3 16"><path d="M1.5 1 L1.5 15" stroke="#666" stroke-width="1" stroke-dasharray="0.6 0.8"/></svg>
<svg class="a" style="left:289px;top:25px;" width="8" height="9" viewBox="0 0 8 9"><path d="M1 1 L5.5 1 L7 2.5 L7 8 L1 8Z" fill="#d8e4f0"/><rect x="2" y="3" width="4" height="3" fill="#4a88c0"/></svg>
<svg class="a" style="left:968px;top:114px;" width="10" height="10" viewBox="0 0 10 10"><path d="M6 1 L9 4 L7.5 4.5 L5.5 6.5 L5.5 8 L2 4.5 L3.5 4.5 L5.5 2.5Z" fill="#d0d0d0"/><path d="M3.5 6.5 L1 9" stroke="#d0d0d0" stroke-width="0.8"/></svg>
<svg class="a" style="left:904px;top:157px;" width="13" height="23" viewBox="0 0 13 23"><path d="M5 1.8 L11.3 1.8 L11.3 9.5 L5 9.5Z M5 7.5 L5 9.5" stroke="#d0d0d0" stroke-width="0.7" fill="none"/><path d="M3 4 L5.8 5.6 L3 7.2Z" fill="#d8d8d8"/><path d="M2.3 13.5 L9 13.5 L9 20.8 L2.3 20.8Z" stroke="#d0d0d0" stroke-width="0.7" fill="none"/><path d="M8.5 15.6 L11.5 17.2 L8.5 18.8Z" fill="#d8d8d8"/></svg>
<svg class="a" style="left:810px;top:198px;" width="38" height="39" viewBox="0 0 38 39"><path d="M2 4 L8 1 L34 1 L35 4 L35 30 L2 30Z" fill="#1fb8c8"/><path d="M2 4 L6 2 L6 33 L2 36Z" fill="#8ad6de"/><rect x="6" y="26" width="29" height="11" fill="#2a9aac"/><path d="M12 23 L18.5 6 L21.5 6 L28 23 L24.5 23 L23 19 L17 19 L15.5 23Z M18 16 L22 16 L20 10Z" fill="#f4f8f8"/><text x="20.5" y="35.5" font-size="7.5" font-weight="bold" fill="#e8f6f8" text-anchor="middle" font-family="Liberation Sans">ARN</text></svg>
<svg class="a" style="left:891.5px;top:244.5px;" width="9" height="6" viewBox="0 0 9 6"><path d="M0.8 0.8 L8 0.8 L4.4 4.8Z" fill="#d8d8d8"/></svg>
<svg class="a" style="left:970.3px;top:242px;" width="7" height="5" viewBox="0 0 7 5"><path d="M0.5 4 L3.5 0.8 L6.5 4Z" fill="#d8d8d8"/></svg>
<svg class="a" style="left:970.3px;top:490.5px;" width="7" height="5" viewBox="0 0 7 5"><path d="M0.5 1 L3.5 4.2 L6.5 1Z" fill="#d8d8d8"/></svg>
<svg class="a" style="left:726px;top:497px;" width="5" height="6" viewBox="0 0 5 6"><path d="M4.5 0.5 L0.5 2.75 L4.5 5Z" fill="#bbb"/></svg>
<svg class="a" style="left:964px;top:497px;" width="5" height="6" viewBox="0 0 5 6"><path d="M0.5 0.5 L4.5 2.75 L0.5 5Z" fill="#bbb"/></svg>
<svg class="a" style="left:971px;top:518px;" width="9" height="5" viewBox="0 0 9 5"><path d="M0.5 0.5 L8 0.5 L4.25 4.2Z" fill="#d8d8d8"/></svg>
<div class="t" style="left:983px;top:117px;font-size:7px;color:#8e8e8e;transform-origin:0 0;transform:translate(7.6px,0) rotate(90deg) scaleX(0.98)">Channel Box / Layer Editor</div>
<div class="t b" style="left:983px;top:211.8px;font-size:7px;color:#e0e0e0;transform-origin:0 0;transform:translate(7.6px,0) rotate(90deg) scaleX(0.92)">Attribute Editor</div>
<div class="t" style="left:983px;top:273px;font-size:7px;color:#8e8e8e;transform-origin:0 0;transform:translate(7.6px,0) rotate(90deg) scaleX(1.0)">Modeling Toolkit</div>
<svg class="a" style="left:33.5px;top:54px;" width="4" height="13" viewBox="0 0 4 13"><rect x="0.5" y="0.5" width="1" height="1" fill="#5e5e5e"/><rect x="2.5" y="0.5" width="1" height="1" fill="#5e5e5e"/><rect x="0.5" y="2.5" width="1" height="1" fill="#5e5e5e"/><rect x="2.5" y="2.5" width="1" height="1" fill="#5e5e5e"/><rect x="0.5" y="4.5" width="1" height="1" fill="#5e5e5e"/><rect x="2.5" y="4.5" width="1" height="1" fill="#5e5e5e"/><rect x="0.5" y="6.5" width="1" height="1" fill="#5e5e5e"/><rect x="2.5" y="6.5" width="1" height="1" fill="#5e5e5e"/><rect x="0.5" y="8.5" width="1" height="1" fill="#5e5e5e"/><rect x="2.5" y="8.5" width="1" height="1" fill="#5e5e5e"/><rect x="0.5" y="10.5" width="1" height="1" fill="#5e5e5e"/><rect x="2.5" y="10.5" width="1" height="1" fill="#5e5e5e"/><rect x="0.5" y="12.5" width="1" height="1" fill="#5e5e5e"/><rect x="2.5" y="12.5" width="1" height="1" fill="#5e5e5e"/></svg>
<svg class="a" style="left:33.5px;top:71px;" width="4" height="35" viewBox="0 0 4 35"><rect x="0.5" y="0.5" width="1" height="1" fill="#5e5e5e"/><rect x="2.5" y="0.5" width="1" height="1" fill="#5e5e5e"/><rect x="0.5" y="2.5" width="1" height="1" fill="#5e5e5e"/><rect x="2.5" y="2.5" width="1" height="1" fill="#5e5e5e"/><rect x="0.5" y="4.5" width="1" height="1" fill="#5e5e5e"/><rect x="2.5" y="4.5" width="1" height="1" fill="#5e5e5e"/><rect x="0.5" y="6.5" width="1" height="1" fill="#5e5e5e"/><rect x="2.5" y="6.5" width="1" height="1" fill="#5e5e5e"/><rect x="0.5" y="8.5" width="1" height="1" fill="#5e5e5e"/><rect x="2.5" y="8.5" width="1" height="1" fill="#5e5e5e"/><rect x="0.5" y="10.5" width="1" height="1" fill="#5e5e5e"/><rect x="2.5" y="10.5" width="1" height="1" fill="#5e5e5e"/><rect x="0.5" y="12.5" width="1" height="1" fill="#5e5e5e"/><rect x="2.5" y="12.5" width="1" height="1" fill="#5e5e5e"/><rect x="0.5" y="14.5" width="1" height="1" fill="#5e5e5e"/><rect x="2.5" y="14.5" width="1" height="1" fill="#5e5e5e"/><rect x="0.5" y="16.5" width="1" height="1" fill="#5e5e5e"/><rect x="2.5" y="16.5" width="1" height="1" fill="#5e5e5e"/><rect x="0.5" y="18.5" width="1" height="1" fill="#5e5e5e"/><rect x="2.5" y="18.5" width="1" height="1" fill="#5e5e5e"/><rect x="0.5" y="20.5" width="1" height="1" fill="#5e5e5e"/><rect x="2.5" y="20.5" width="1" height="1" fill="#5e5e5e"/><rect x="0.5" y="22.5" width="1" height="1" fill="#5e5e5e"/><rect x="2.5" y="22.5" width="1" height="1" fill="#5e5e5e"/><rect x="0.5" y="24.5" width="1" height="1" fill="#5e5e5e"/><rect x="2.5" y="24.5" width="1" height="1" fill="#5e5e5e"/><rect x="0.5" y="26.5" width="1" height="1" fill="#5e5e5e"/><rect x="2.5" y="26.5" width="1" height="1" fill="#5e5e5e"/><rect x="0.5" y="28.5" width="1" height="1" fill="#5e5e5e"/><rect x="2.5" y="28.5" width="1" height="1" fill="#5e5e5e"/><rect x="0.5" y="30.5" width="1" height="1" fill="#5e5e5e"/><rect x="2.5" y="30.5" width="1" height="1" fill="#5e5e5e"/><rect x="0.5" y="32.5" width="1" height="1" fill="#5e5e5e"/><rect x="2.5" y="32.5" width="1" height="1" fill="#5e5e5e"/><rect x="0.5" y="34.5" width="1" height="1" fill="#5e5e5e"/><rect x="2.5" y="34.5" width="1" height="1" fill="#5e5e5e"/></svg>
<svg class="a" style="left:34px;top:111px;" width="22" height="3" viewBox="0 0 22 3"><rect x="0.5" y="0.5" width="1" height="1" fill="#5e5e5e"/><rect x="2.5" y="0.5" width="1" height="1" fill="#5e5e5e"/><rect x="4.5" y="0.5" width="1" height="1" fill="#5e5e5e"/><rect x="6.5" y="0.5" width="1" height="1" fill="#5e5e5e"/><rect x="8.5" y="0.5" width="1" height="1" fill="#5e5e5e"/><rect x="10.5" y="0.5" width="1" height="1" fill="#5e5e5e"/><rect x="12.5" y="0.5" width="1" height="1" fill="#5e5e5e"/><rect x="14.5" y="0.5" width="1" height="1" fill="#5e5e5e"/><rect x="16.5" y="0.5" width="1" height="1" fill="#5e5e5e"/><rect x="18.5" y="0.5" width="1" height="1" fill="#5e5e5e"/><rect x="20.5" y="0.5" width="1" height="1" fill="#5e5e5e"/><rect x="0.5" y="2.5" width="1" height="1" fill="#5e5e5e"/><rect x="2.5" y="2.5" width="1" height="1" fill="#5e5e5e"/><rect x="4.5" y="2.5" width="1" height="1" fill="#5e5e5e"/><rect x="6.5" y="2.5" width="1" height="1" fill="#5e5e5e"/><rect x="8.5" y="2.5" width="1" height="1" fill="#5e5e5e"/><rect x="10.5" y="2.5" width="1" height="1" fill="#5e5e5e"/><rect x="12.5" y="2.5" width="1" height="1" fill="#5e5e5e"/><rect x="14.5" y="2.5" width="1" height="1" fill="#5e5e5e"/><rect x="16.5" y="2.5" width="1" height="1" fill="#5e5e5e"/><rect x="18.5" y="2.5" width="1" height="1" fill="#5e5e5e"/><rect x="20.5" y="2.5" width="1" height="1" fill="#5e5e5e"/></svg>
</div><div style="position:absolute;left:32px;top:22px;width:960px;height:586px;border:1px solid rgba(255,255,255,0.09);border-radius:6px;pointer-events:none"></div></body></html>
